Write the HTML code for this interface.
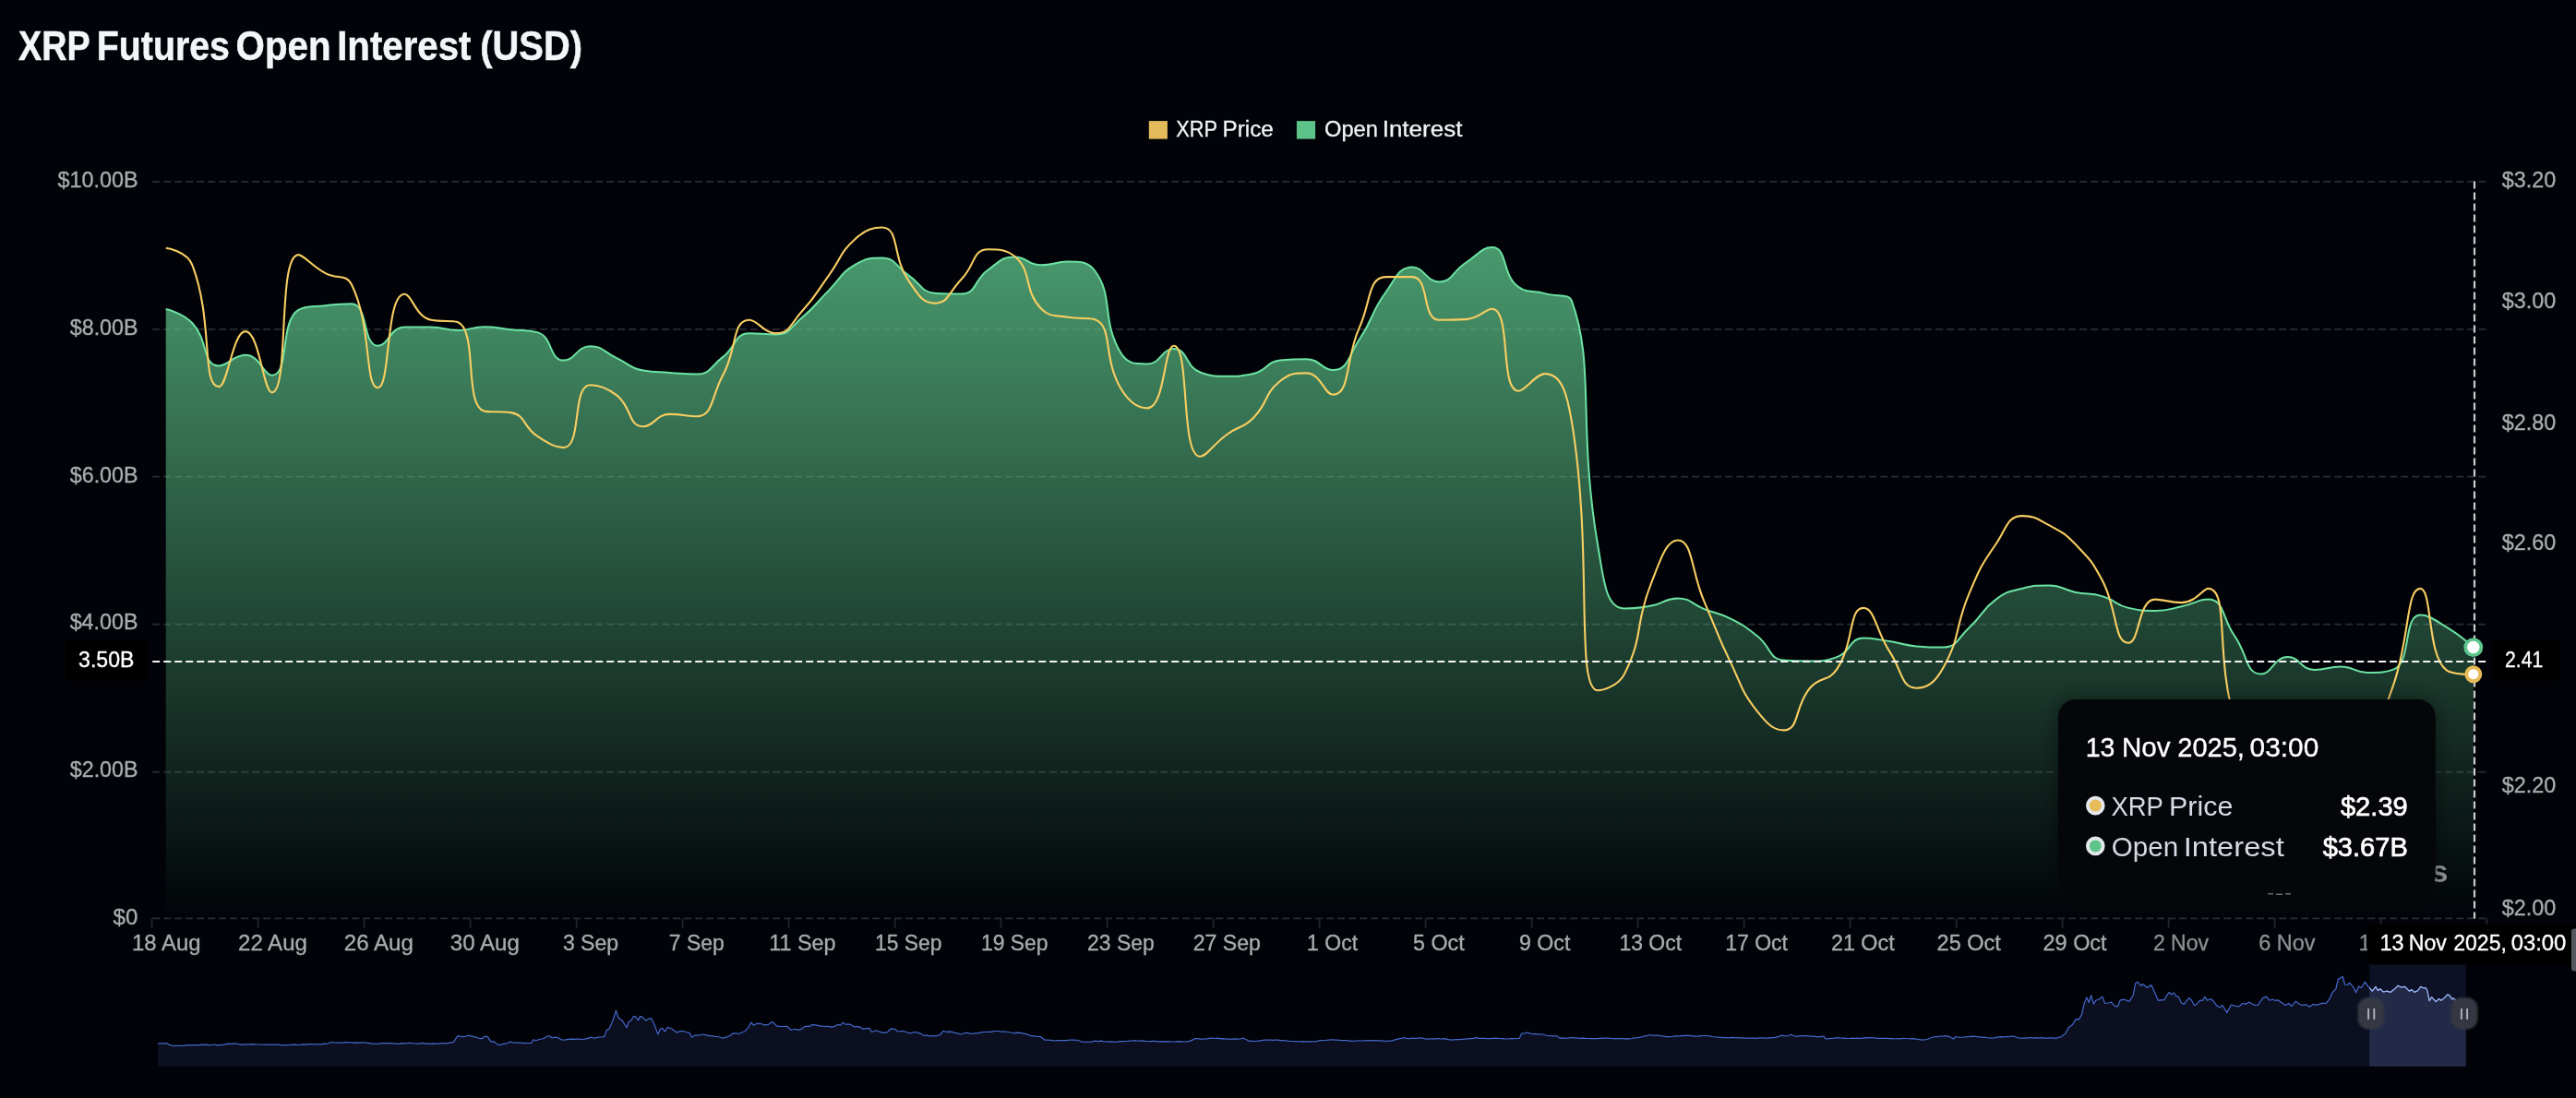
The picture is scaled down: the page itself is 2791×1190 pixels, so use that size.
<!DOCTYPE html>
<html lang="en"><head><meta charset="utf-8"><title>XRP Futures Open Interest (USD)</title>
<style>
html,body{margin:0;padding:0;background:#010308;}
body{width:2791px;height:1190px;overflow:hidden;font-family:"Liberation Sans", sans-serif;}
svg{display:block;will-change:transform;}
text{font-family:"Liberation Sans", sans-serif;}
</style></head><body>
<svg width="2791" height="1190" viewBox="0 0 2791 1190">
<defs>
<linearGradient id="ga" gradientUnits="userSpaceOnUse" x1="0" y1="268" x2="0" y2="996.4">
<stop offset="0" stop-color="#5dc389" stop-opacity="0.78"/>
<stop offset="1" stop-color="#5dc389" stop-opacity="0"/>
</linearGradient>
<clipPath id="plot"><rect x="160" y="180" width="2540" height="820"/></clipPath>
<filter id="sh" x="-20%" y="-20%" width="140%" height="140%"><feGaussianBlur stdDeviation="9"/></filter>
<filter id="hb" x="-30%" y="-30%" width="160%" height="160%"><feGaussianBlur stdDeviation="1.2"/></filter>
</defs>
<rect width="2791" height="1190" fill="#010308"/>
<text x="20.02" y="64.60" font-size="43.70" font-weight="700" fill="#f3f5f9" textLength="77.66" lengthAdjust="spacingAndGlyphs" stroke="#f3f5f9" stroke-width="0.5">XRP</text>
<text x="104.85" y="64.60" font-size="43.70" font-weight="700" fill="#f3f5f9" textLength="144.11" lengthAdjust="spacingAndGlyphs" stroke="#f3f5f9" stroke-width="0.5">Futures</text>
<text x="255.59" y="64.60" font-size="43.70" font-weight="700" fill="#f3f5f9" textLength="102.96" lengthAdjust="spacingAndGlyphs" stroke="#f3f5f9" stroke-width="0.5">Open</text>
<text x="365.19" y="64.60" font-size="43.70" font-weight="700" fill="#f3f5f9" textLength="145.21" lengthAdjust="spacingAndGlyphs" stroke="#f3f5f9" stroke-width="0.5">Interest</text>
<text x="520.31" y="64.60" font-size="43.70" font-weight="700" fill="#f3f5f9" textLength="110.69" lengthAdjust="spacingAndGlyphs" stroke="#f3f5f9" stroke-width="0.5">(USD)</text>
<rect x="1244.8" y="131.1" width="20.1" height="19.5" fill="#e4ba5b"/>
<text x="1274.26" y="147.70" font-size="24.20" fill="#f2f4f6" textLength="44.76" lengthAdjust="spacingAndGlyphs" stroke="#f2f4f6" stroke-width="0.3">XRP</text>
<text x="1324.56" y="147.70" font-size="24.20" fill="#f2f4f6" textLength="55.32" lengthAdjust="spacingAndGlyphs" stroke="#f2f4f6" stroke-width="0.3">Price</text>
<rect x="1404.9" y="131.1" width="20.2" height="19.5" fill="#5dc389"/>
<text x="1435.03" y="147.70" font-size="24.20" fill="#f2f4f6" textLength="57.94" lengthAdjust="spacingAndGlyphs" stroke="#f2f4f6" stroke-width="0.3">Open</text>
<text x="1497.66" y="147.70" font-size="24.20" fill="#f2f4f6" textLength="86.70" lengthAdjust="spacingAndGlyphs" stroke="#f2f4f6" stroke-width="0.3">Interest</text>
<line x1="165.2" y1="196.9" x2="2693.7" y2="196.9" stroke="#292c30" stroke-width="1.8" stroke-dasharray="8 4"/>
<line x1="165.2" y1="356.8" x2="2693.7" y2="356.8" stroke="#292c30" stroke-width="1.8" stroke-dasharray="8 4"/>
<line x1="165.2" y1="516.7" x2="2693.7" y2="516.7" stroke="#292c30" stroke-width="1.8" stroke-dasharray="8 4"/>
<line x1="165.2" y1="676.7" x2="2693.7" y2="676.7" stroke="#292c30" stroke-width="1.8" stroke-dasharray="8 4"/>
<line x1="165.2" y1="836.6" x2="2693.7" y2="836.6" stroke="#292c30" stroke-width="1.8" stroke-dasharray="8 4"/>
<line x1="165.2" y1="995.3" x2="2693.7" y2="995.3" stroke="#292c30" stroke-width="1.8" stroke-dasharray="8 4"/>
<line x1="164.6" y1="995.3" x2="164.6" y2="1005.4" stroke="#23262a" stroke-width="1.8"/>
<line x1="279.6" y1="995.3" x2="279.6" y2="1005.4" stroke="#23262a" stroke-width="1.8"/>
<line x1="394.6" y1="995.3" x2="394.6" y2="1005.4" stroke="#23262a" stroke-width="1.8"/>
<line x1="509.6" y1="995.3" x2="509.6" y2="1005.4" stroke="#23262a" stroke-width="1.8"/>
<line x1="624.6" y1="995.3" x2="624.6" y2="1005.4" stroke="#23262a" stroke-width="1.8"/>
<line x1="739.6" y1="995.3" x2="739.6" y2="1005.4" stroke="#23262a" stroke-width="1.8"/>
<line x1="854.6" y1="995.3" x2="854.6" y2="1005.4" stroke="#23262a" stroke-width="1.8"/>
<line x1="969.6" y1="995.3" x2="969.6" y2="1005.4" stroke="#23262a" stroke-width="1.8"/>
<line x1="1084.6" y1="995.3" x2="1084.6" y2="1005.4" stroke="#23262a" stroke-width="1.8"/>
<line x1="1199.6" y1="995.3" x2="1199.6" y2="1005.4" stroke="#23262a" stroke-width="1.8"/>
<line x1="1314.6" y1="995.3" x2="1314.6" y2="1005.4" stroke="#23262a" stroke-width="1.8"/>
<line x1="1429.6" y1="995.3" x2="1429.6" y2="1005.4" stroke="#23262a" stroke-width="1.8"/>
<line x1="1544.6" y1="995.3" x2="1544.6" y2="1005.4" stroke="#23262a" stroke-width="1.8"/>
<line x1="1659.6" y1="995.3" x2="1659.6" y2="1005.4" stroke="#23262a" stroke-width="1.8"/>
<line x1="1774.6" y1="995.3" x2="1774.6" y2="1005.4" stroke="#23262a" stroke-width="1.8"/>
<line x1="1889.6" y1="995.3" x2="1889.6" y2="1005.4" stroke="#23262a" stroke-width="1.8"/>
<line x1="2004.6" y1="995.3" x2="2004.6" y2="1005.4" stroke="#23262a" stroke-width="1.8"/>
<line x1="2119.6" y1="995.3" x2="2119.6" y2="1005.4" stroke="#23262a" stroke-width="1.8"/>
<line x1="2234.6" y1="995.3" x2="2234.6" y2="1005.4" stroke="#23262a" stroke-width="1.8"/>
<line x1="2349.6" y1="995.3" x2="2349.6" y2="1005.4" stroke="#23262a" stroke-width="1.8"/>
<line x1="2464.6" y1="995.3" x2="2464.6" y2="1005.4" stroke="#23262a" stroke-width="1.8"/>
<line x1="2579.6" y1="995.3" x2="2579.6" y2="1005.4" stroke="#23262a" stroke-width="1.8"/>
<line x1="2694.4" y1="995.3" x2="2694.4" y2="1005.4" stroke="#23262a" stroke-width="1.8"/>
<text x="62.47" y="202.90" font-size="24.50" fill="#a9abae" textLength="87.07" lengthAdjust="spacingAndGlyphs" stroke="#a9abae" stroke-width="0.35">$10.00B</text>
<text x="75.77" y="362.80" font-size="24.50" fill="#a9abae" textLength="73.73" lengthAdjust="spacingAndGlyphs" stroke="#a9abae" stroke-width="0.35">$8.00B</text>
<text x="75.77" y="522.70" font-size="24.50" fill="#a9abae" textLength="73.73" lengthAdjust="spacingAndGlyphs" stroke="#a9abae" stroke-width="0.35">$6.00B</text>
<text x="75.67" y="682.30" font-size="24.50" fill="#a9abae" textLength="73.84" lengthAdjust="spacingAndGlyphs" stroke="#a9abae" stroke-width="0.35">$4.00B</text>
<text x="75.77" y="842.00" font-size="24.50" fill="#a9abae" textLength="73.73" lengthAdjust="spacingAndGlyphs" stroke="#a9abae" stroke-width="0.35">$2.00B</text>
<text x="122.56" y="1001.80" font-size="24.50" fill="#a9abae" textLength="26.69" lengthAdjust="spacingAndGlyphs" stroke="#a9abae" stroke-width="0.35">$0</text>
<text x="2710.77" y="202.80" font-size="24.50" fill="#a9abae" textLength="58.51" lengthAdjust="spacingAndGlyphs" stroke="#a9abae" stroke-width="0.35">$3.20</text>
<text x="2710.77" y="333.60" font-size="24.50" fill="#a9abae" textLength="58.51" lengthAdjust="spacingAndGlyphs" stroke="#a9abae" stroke-width="0.35">$3.00</text>
<text x="2710.77" y="465.50" font-size="24.50" fill="#a9abae" textLength="58.51" lengthAdjust="spacingAndGlyphs" stroke="#a9abae" stroke-width="0.35">$2.80</text>
<text x="2710.77" y="596.40" font-size="24.50" fill="#a9abae" textLength="58.51" lengthAdjust="spacingAndGlyphs" stroke="#a9abae" stroke-width="0.35">$2.60</text>
<text x="2710.77" y="859.20" font-size="24.50" fill="#a9abae" textLength="58.51" lengthAdjust="spacingAndGlyphs" stroke="#a9abae" stroke-width="0.35">$2.20</text>
<text x="2710.77" y="991.60" font-size="24.50" fill="#a9abae" textLength="58.51" lengthAdjust="spacingAndGlyphs" stroke="#a9abae" stroke-width="0.35">$2.00</text>
<text x="143.06" y="1029.80" font-size="24.50" fill="#a9abae" textLength="74.43" lengthAdjust="spacingAndGlyphs" stroke="#a9abae" stroke-width="0.35">18 Aug</text>
<text x="258.00" y="1029.80" font-size="24.50" fill="#a9abae" textLength="74.95" lengthAdjust="spacingAndGlyphs" stroke="#a9abae" stroke-width="0.35">22 Aug</text>
<text x="372.79" y="1029.80" font-size="24.50" fill="#a9abae" textLength="75.16" lengthAdjust="spacingAndGlyphs" stroke="#a9abae" stroke-width="0.35">26 Aug</text>
<text x="487.84" y="1029.80" font-size="24.50" fill="#a9abae" textLength="75.12" lengthAdjust="spacingAndGlyphs" stroke="#a9abae" stroke-width="0.35">30 Aug</text>
<text x="609.88" y="1029.80" font-size="24.50" fill="#a9abae" textLength="60.32" lengthAdjust="spacingAndGlyphs" stroke="#a9abae" stroke-width="0.35">3 Sep</text>
<text x="724.80" y="1029.80" font-size="24.50" fill="#a9abae" textLength="60.05" lengthAdjust="spacingAndGlyphs" stroke="#a9abae" stroke-width="0.35">7 Sep</text>
<text x="833.25" y="1029.80" font-size="24.50" fill="#a9abae" textLength="72.29" lengthAdjust="spacingAndGlyphs" stroke="#a9abae" stroke-width="0.35">11 Sep</text>
<text x="948.09" y="1029.80" font-size="24.50" fill="#a9abae" textLength="72.42" lengthAdjust="spacingAndGlyphs" stroke="#a9abae" stroke-width="0.35">15 Sep</text>
<text x="1062.99" y="1029.80" font-size="24.50" fill="#a9abae" textLength="72.42" lengthAdjust="spacingAndGlyphs" stroke="#a9abae" stroke-width="0.35">19 Sep</text>
<text x="1178.00" y="1029.80" font-size="24.50" fill="#a9abae" textLength="72.76" lengthAdjust="spacingAndGlyphs" stroke="#a9abae" stroke-width="0.35">23 Sep</text>
<text x="1292.64" y="1029.80" font-size="24.50" fill="#a9abae" textLength="73.27" lengthAdjust="spacingAndGlyphs" stroke="#a9abae" stroke-width="0.35">27 Sep</text>
<text x="1416.08" y="1029.80" font-size="24.50" fill="#a9abae" textLength="54.95" lengthAdjust="spacingAndGlyphs" stroke="#a9abae" stroke-width="0.35">1 Oct</text>
<text x="1531.07" y="1029.80" font-size="24.50" fill="#a9abae" textLength="55.55" lengthAdjust="spacingAndGlyphs" stroke="#a9abae" stroke-width="0.35">5 Oct</text>
<text x="1646.01" y="1029.80" font-size="24.50" fill="#a9abae" textLength="55.37" lengthAdjust="spacingAndGlyphs" stroke="#a9abae" stroke-width="0.35">9 Oct</text>
<text x="1754.38" y="1029.80" font-size="24.50" fill="#a9abae" textLength="67.66" lengthAdjust="spacingAndGlyphs" stroke="#a9abae" stroke-width="0.35">13 Oct</text>
<text x="1869.17" y="1029.80" font-size="24.50" fill="#a9abae" textLength="67.86" lengthAdjust="spacingAndGlyphs" stroke="#a9abae" stroke-width="0.35">17 Oct</text>
<text x="1983.93" y="1029.80" font-size="24.50" fill="#a9abae" textLength="68.70" lengthAdjust="spacingAndGlyphs" stroke="#a9abae" stroke-width="0.35">21 Oct</text>
<text x="2098.58" y="1029.80" font-size="24.50" fill="#a9abae" textLength="69.21" lengthAdjust="spacingAndGlyphs" stroke="#a9abae" stroke-width="0.35">25 Oct</text>
<text x="2213.58" y="1029.80" font-size="24.50" fill="#a9abae" textLength="69.01" lengthAdjust="spacingAndGlyphs" stroke="#a9abae" stroke-width="0.35">29 Oct</text>
<text x="2332.90" y="1029.80" font-size="24.50" fill="#8d8f93" textLength="60.22" lengthAdjust="spacingAndGlyphs" stroke="#8d8f93" stroke-width="0.35">2 Nov</text>
<text x="2447.17" y="1029.80" font-size="24.50" fill="#8d8f93" textLength="61.45" lengthAdjust="spacingAndGlyphs" stroke="#8d8f93" stroke-width="0.35">6 Nov</text>
<text x="2555.81" y="1029.80" font-size="24.50" fill="#8d8f93" textLength="73.32" lengthAdjust="spacingAndGlyphs" stroke="#8d8f93" stroke-width="0.35">10 Nov</text>
<g clip-path="url(#plot)">
<path d="M179.7 335.1C179.7 335.1 197.7 338.8 208.4 350.3C226.4 369.5 218.9 396.5 237.2 396.5C247.6 396.5 252.6 384.8 265.9 384.8C281.4 384.8 285.4 406.7 294.6 406.7C314.2 406.7 302.6 347.9 323.4 335.8C331.3 331.2 337.7 332.8 352.1 331.2C366.4 329.6 370.8 329.3 380.9 329.3C399.6 329.3 392.2 374.8 409.6 374.8C421.0 374.8 422.5 354.5 438.3 354.5C451.3 354.5 452.8 354.5 467.1 354.5C481.5 354.5 481.4 358.0 495.8 358.0C510.2 358.0 510.2 354.2 524.5 354.2C538.9 354.2 538.9 355.8 553.3 357.3C567.6 358.8 570.3 357.3 582.0 360.1C599.0 364.2 594.6 390.6 610.8 390.6C623.3 390.6 624.9 375.2 639.5 375.2C653.6 375.2 653.9 381.5 668.2 388.1C682.7 394.7 681.9 399.1 697.0 401.6C710.6 403.9 711.3 402.9 725.7 403.9C740.1 404.9 741.3 405.6 754.4 405.6C770.1 405.6 769.6 397.3 783.2 386.9C798.4 375.2 795.5 361.3 811.9 361.3C824.2 361.3 827.5 362.4 840.7 362.4C856.3 362.4 856.3 354.7 869.4 343.8C885.0 330.8 883.6 329.0 898.1 314.6C912.3 300.4 910.3 296.1 926.9 286.6C939.1 279.6 942.3 279.6 955.6 279.6C971.0 279.6 970.0 288.8 984.3 298.3C998.8 307.9 997.4 316.6 1013.1 317.7C1026.1 318.6 1029.6 318.6 1041.8 318.6C1058.3 318.6 1054.8 303.5 1070.5 292.5C1083.5 283.4 1084.5 278.5 1099.3 278.5C1113.2 278.5 1113.4 287.3 1128.0 287.3C1142.1 287.3 1142.7 283.6 1156.8 283.6C1171.4 283.6 1178.5 283.6 1185.5 292.5C1207.3 320.4 1192.6 345.7 1214.2 382.3C1221.4 394.4 1229.0 394.4 1243.0 394.4C1257.8 394.4 1258.4 378.1 1271.7 378.1C1287.1 378.1 1284.1 397.8 1300.4 403.5C1312.8 407.8 1314.8 407.8 1329.2 407.8C1343.5 407.8 1344.3 407.8 1357.9 405.1C1373.1 402.1 1371.5 392.2 1386.7 390.6C1400.2 389.2 1401.6 389.2 1415.4 389.2C1430.3 389.2 1432.2 401.1 1444.1 401.1C1461.0 401.1 1460.6 385.9 1472.9 367.8C1489.3 343.6 1484.4 339.9 1501.6 316.5C1513.1 300.8 1514.7 289.6 1530.3 289.6C1543.4 289.6 1545.2 305.5 1559.1 305.5C1574.0 305.5 1573.0 294.6 1587.8 285.0C1601.8 275.9 1605.3 268.0 1616.5 268.0C1634.0 268.0 1627.0 298.8 1645.3 311.1C1655.7 318.1 1659.7 314.4 1674.0 318.1C1688.4 321.8 1699.9 318.1 1702.8 325.8C1728.6 395.4 1708.9 461.6 1731.5 593.0C1737.6 628.5 1739.7 659.6 1760.2 659.6C1768.4 659.6 1774.8 659.4 1789.0 656.6C1803.6 653.8 1803.6 648.4 1817.7 648.4C1832.3 648.4 1832.0 654.5 1846.4 660.1C1860.7 665.6 1861.6 663.7 1875.2 670.6C1890.4 678.3 1890.5 678.8 1903.9 689.3C1919.2 701.3 1916.1 714.4 1932.7 715.6C1944.9 716.5 1947.1 716.5 1961.4 716.5C1975.8 716.5 1977.2 716.5 1990.1 712.1C2005.9 706.8 2003.1 691.6 2018.9 691.6C2031.8 691.6 2033.3 692.9 2047.6 695.1C2062.0 697.3 2061.9 699.2 2076.3 700.4C2090.6 701.6 2092.3 701.6 2105.1 701.6C2121.1 701.6 2120.5 691.9 2133.8 679.9C2149.2 665.9 2146.1 661.7 2162.6 649.6C2174.8 640.6 2176.4 641.2 2191.3 637.7C2205.1 634.4 2205.8 634.4 2220.0 634.4C2234.6 634.4 2234.2 638.9 2248.8 641.9C2263.0 644.8 2263.7 642.0 2277.5 646.1C2292.4 650.5 2291.3 655.5 2306.2 658.9C2320.0 662.0 2320.7 662.0 2335.0 662.0C2349.4 662.0 2349.5 660.4 2363.7 657.3C2378.2 654.2 2381.6 649.6 2392.4 649.6C2410.3 649.6 2407.0 669.3 2421.2 689.3C2435.7 709.8 2432.8 730.5 2449.9 730.5C2461.5 730.5 2463.8 712.1 2478.7 712.1C2492.5 712.1 2492.3 725.9 2507.4 725.9C2521.1 725.9 2521.9 722.4 2536.1 722.4C2550.6 722.4 2550.4 728.9 2564.9 728.9C2579.1 728.9 2584.8 728.9 2593.6 725.4C2613.5 717.5 2603.0 666.6 2622.3 666.6C2631.7 666.6 2637.6 671.7 2651.1 679.9C2666.4 689.2 2679.8 701.6 2679.8 701.6L2679.8 996.4 L179.7 996.4 Z" fill="url(#ga)"/>
<path d="M179.7 335.1C179.7 335.1 197.7 338.8 208.4 350.3C226.4 369.5 218.9 396.5 237.2 396.5C247.6 396.5 252.6 384.8 265.9 384.8C281.4 384.8 285.4 406.7 294.6 406.7C314.2 406.7 302.6 347.9 323.4 335.8C331.3 331.2 337.7 332.8 352.1 331.2C366.4 329.6 370.8 329.3 380.9 329.3C399.6 329.3 392.2 374.8 409.6 374.8C421.0 374.8 422.5 354.5 438.3 354.5C451.3 354.5 452.8 354.5 467.1 354.5C481.5 354.5 481.4 358.0 495.8 358.0C510.2 358.0 510.2 354.2 524.5 354.2C538.9 354.2 538.9 355.8 553.3 357.3C567.6 358.8 570.3 357.3 582.0 360.1C599.0 364.2 594.6 390.6 610.8 390.6C623.3 390.6 624.9 375.2 639.5 375.2C653.6 375.2 653.9 381.5 668.2 388.1C682.7 394.7 681.9 399.1 697.0 401.6C710.6 403.9 711.3 402.9 725.7 403.9C740.1 404.9 741.3 405.6 754.4 405.6C770.1 405.6 769.6 397.3 783.2 386.9C798.4 375.2 795.5 361.3 811.9 361.3C824.2 361.3 827.5 362.4 840.7 362.4C856.3 362.4 856.3 354.7 869.4 343.8C885.0 330.8 883.6 329.0 898.1 314.6C912.3 300.4 910.3 296.1 926.9 286.6C939.1 279.6 942.3 279.6 955.6 279.6C971.0 279.6 970.0 288.8 984.3 298.3C998.8 307.9 997.4 316.6 1013.1 317.7C1026.1 318.6 1029.6 318.6 1041.8 318.6C1058.3 318.6 1054.8 303.5 1070.5 292.5C1083.5 283.4 1084.5 278.5 1099.3 278.5C1113.2 278.5 1113.4 287.3 1128.0 287.3C1142.1 287.3 1142.7 283.6 1156.8 283.6C1171.4 283.6 1178.5 283.6 1185.5 292.5C1207.3 320.4 1192.6 345.7 1214.2 382.3C1221.4 394.4 1229.0 394.4 1243.0 394.4C1257.8 394.4 1258.4 378.1 1271.7 378.1C1287.1 378.1 1284.1 397.8 1300.4 403.5C1312.8 407.8 1314.8 407.8 1329.2 407.8C1343.5 407.8 1344.3 407.8 1357.9 405.1C1373.1 402.1 1371.5 392.2 1386.7 390.6C1400.2 389.2 1401.6 389.2 1415.4 389.2C1430.3 389.2 1432.2 401.1 1444.1 401.1C1461.0 401.1 1460.6 385.9 1472.9 367.8C1489.3 343.6 1484.4 339.9 1501.6 316.5C1513.1 300.8 1514.7 289.6 1530.3 289.6C1543.4 289.6 1545.2 305.5 1559.1 305.5C1574.0 305.5 1573.0 294.6 1587.8 285.0C1601.8 275.9 1605.3 268.0 1616.5 268.0C1634.0 268.0 1627.0 298.8 1645.3 311.1C1655.7 318.1 1659.7 314.4 1674.0 318.1C1688.4 321.8 1699.9 318.1 1702.8 325.8C1728.6 395.4 1708.9 461.6 1731.5 593.0C1737.6 628.5 1739.7 659.6 1760.2 659.6C1768.4 659.6 1774.8 659.4 1789.0 656.6C1803.6 653.8 1803.6 648.4 1817.7 648.4C1832.3 648.4 1832.0 654.5 1846.4 660.1C1860.7 665.6 1861.6 663.7 1875.2 670.6C1890.4 678.3 1890.5 678.8 1903.9 689.3C1919.2 701.3 1916.1 714.4 1932.7 715.6C1944.9 716.5 1947.1 716.5 1961.4 716.5C1975.8 716.5 1977.2 716.5 1990.1 712.1C2005.9 706.8 2003.1 691.6 2018.9 691.6C2031.8 691.6 2033.3 692.9 2047.6 695.1C2062.0 697.3 2061.9 699.2 2076.3 700.4C2090.6 701.6 2092.3 701.6 2105.1 701.6C2121.1 701.6 2120.5 691.9 2133.8 679.9C2149.2 665.9 2146.1 661.7 2162.6 649.6C2174.8 640.6 2176.4 641.2 2191.3 637.7C2205.1 634.4 2205.8 634.4 2220.0 634.4C2234.6 634.4 2234.2 638.9 2248.8 641.9C2263.0 644.8 2263.7 642.0 2277.5 646.1C2292.4 650.5 2291.3 655.5 2306.2 658.9C2320.0 662.0 2320.7 662.0 2335.0 662.0C2349.4 662.0 2349.5 660.4 2363.7 657.3C2378.2 654.2 2381.6 649.6 2392.4 649.6C2410.3 649.6 2407.0 669.3 2421.2 689.3C2435.7 709.8 2432.8 730.5 2449.9 730.5C2461.5 730.5 2463.8 712.1 2478.7 712.1C2492.5 712.1 2492.3 725.9 2507.4 725.9C2521.1 725.9 2521.9 722.4 2536.1 722.4C2550.6 722.4 2550.4 728.9 2564.9 728.9C2579.1 728.9 2584.8 728.9 2593.6 725.4C2613.5 717.5 2603.0 666.6 2622.3 666.6C2631.7 666.6 2637.6 671.7 2651.1 679.9C2666.4 689.2 2679.8 701.6 2679.8 701.6" fill="none" stroke="#6ce3a3" stroke-width="2.0" stroke-linejoin="round"/>
<path d="M179.7 268.7C179.7 268.7 202.6 272.1 208.4 287.3C231.4 347.3 217.9 419.1 237.2 419.1C246.7 419.1 252.1 359.1 265.9 359.1C280.9 359.1 285.4 425.4 294.6 425.4C314.1 425.4 300.0 276.1 323.4 276.1C328.7 276.1 337.0 287.4 352.1 295.9C365.7 303.5 374.7 295.9 380.9 308.3C403.5 354.1 394.6 420.2 409.6 420.2C423.3 420.2 417.5 318.8 438.3 318.8C446.3 318.8 450.3 343.6 467.1 346.8C479.1 349.1 489.4 346.8 495.8 349.1C518.1 357.1 502.2 439.5 524.5 445.4C530.9 447.1 541.0 445.4 553.3 447.1C569.7 449.4 566.2 462.2 582.0 472.7C594.9 481.2 602.2 485.1 610.8 485.1C630.9 485.1 619.2 417.2 639.5 417.2C648.0 417.2 656.4 419.2 668.2 428.4C685.2 441.7 680.2 462.2 697.0 462.2C708.9 462.2 710.7 448.9 725.7 448.9C739.4 448.9 744.3 451.3 754.4 451.3C773.1 451.3 770.4 429.9 783.2 406.7C799.2 377.6 792.6 346.8 811.9 346.8C821.3 346.8 827.4 361.3 840.7 361.3C856.2 361.3 856.7 350.7 869.4 336.8C885.5 319.2 883.9 317.6 898.1 298.3C912.6 278.6 909.3 274.5 926.9 258.7C938.1 248.6 946.2 246.5 955.6 246.5C975.0 246.5 966.2 278.2 984.3 304.1C995.0 319.3 998.9 328.6 1013.1 328.6C1027.6 328.6 1028.2 316.3 1041.8 302.5C1056.9 287.2 1053.5 270.3 1070.5 270.3C1082.3 270.3 1090.1 270.3 1099.3 277.8C1118.9 293.8 1108.6 314.7 1128.0 334.4C1137.3 343.8 1142.0 341.4 1156.8 343.8C1170.8 346.1 1177.9 343.8 1185.5 346.1C1206.6 352.5 1194.4 387.5 1214.2 420.7C1223.2 435.7 1233.5 442.4 1243.0 442.4C1262.3 442.4 1261.0 374.8 1271.7 374.8C1289.7 374.8 1278.4 494.8 1300.4 494.8C1307.1 494.8 1314.1 482.0 1329.2 471.0C1342.9 461.0 1346.2 464.7 1357.9 452.9C1374.9 435.8 1368.8 427.6 1386.7 413.2C1397.6 404.4 1402.5 404.4 1415.4 404.4C1431.2 404.4 1434.9 427.7 1444.1 427.7C1463.6 427.7 1456.8 390.5 1472.9 354.9C1485.6 326.7 1482.0 300.1 1501.6 300.1C1510.7 300.1 1520.5 300.1 1530.3 300.1C1549.2 300.1 1540.2 346.8 1559.1 346.8C1569.0 346.8 1574.0 346.8 1587.8 346.1C1602.7 345.3 1609.4 334.7 1616.5 334.7C1638.1 334.7 1624.2 423.7 1645.3 423.7C1653.0 423.7 1663.5 405.1 1674.0 405.1C1692.2 405.1 1698.0 427.7 1702.8 456.4C1726.7 599.3 1705.7 748.3 1731.5 748.3C1734.5 748.3 1753.1 744.6 1760.2 730.1C1781.8 686.5 1770.3 679.2 1789.0 632.1C1799.0 606.9 1805.3 585.5 1817.7 585.5C1834.1 585.5 1832.1 618.7 1846.4 651.9C1860.8 685.1 1859.4 685.8 1875.2 718.4C1888.2 745.3 1885.8 747.9 1903.9 770.9C1914.6 784.4 1921.3 791.4 1932.7 791.4C1950.1 791.4 1943.9 765.3 1961.4 745.2C1972.6 732.3 1980.8 739.4 1990.1 725.4C2009.5 696.3 2002.6 658.9 2018.9 658.9C2031.4 658.9 2032.2 683.5 2047.6 706.7C2061.0 726.9 2059.8 745.7 2076.3 745.7C2088.6 745.7 2096.7 739.3 2105.1 724.2C2125.4 687.8 2116.9 682.3 2133.8 642.6C2145.6 614.9 2145.6 614.2 2162.6 589.5C2174.3 572.4 2174.7 559.1 2191.3 559.1C2203.4 559.1 2206.8 562.0 2220.0 569.2C2235.5 577.5 2236.5 577.5 2248.8 590.1C2265.3 607.2 2266.2 607.6 2277.5 628.6C2294.9 660.9 2289.8 696.7 2306.2 696.7C2318.5 696.7 2316.1 649.6 2335.0 649.6C2344.9 649.6 2350.2 653.1 2363.7 653.1C2378.9 653.1 2387.2 637.9 2392.4 637.9C2415.9 637.9 2399.7 712.0 2421.2 780.0C2428.5 803.1 2433.1 802.5 2449.9 820.0C2461.9 832.5 2462.9 840.0 2478.7 840.0C2491.6 840.0 2493.0 840.0 2507.4 840.0C2521.8 840.0 2525.0 840.0 2536.1 840.0C2553.7 840.0 2553.6 824.4 2564.9 805.0C2582.3 774.9 2582.2 774.1 2593.6 741.0C2611.0 690.5 2607.0 637.9 2622.3 637.9C2635.7 637.9 2629.2 711.9 2651.1 726.6C2657.9 731.2 2679.8 731.2 2679.8 731.2" fill="none" stroke="#f8ce62" stroke-width="2.1" stroke-linejoin="round"/>
</g>
<text x="2634" y="955.5" font-size="33" font-weight="700" fill="#96989c">s</text>
<path d="M2457 968.6h6M2466 969.2h7M2476 968.6h6" stroke="#8a8c90" stroke-width="1.6" fill="none"/>
<line x1="165.2" y1="717" x2="2693.7" y2="717" stroke="#f4f4f4" stroke-width="2.2" stroke-dasharray="8 4"/>
<line x1="2681" y1="196.4" x2="2681" y2="995.5" stroke="#cbcdd0" stroke-width="2.2" stroke-dasharray="8 4"/>
<rect x="71.2" y="693.9" width="88.1" height="44.2" rx="4.5" fill="#000"/>
<text x="85.08" y="722.80" font-size="24.50" fill="#fff" textLength="60.25" lengthAdjust="spacingAndGlyphs" stroke="#fff" stroke-width="0.35">3.50B</text>
<rect x="2699.8" y="693.8" width="72.8" height="44.2" rx="4.5" fill="#000"/>
<text x="2713.94" y="722.90" font-size="24.50" fill="#fff" textLength="41.35" lengthAdjust="spacingAndGlyphs" stroke="#fff" stroke-width="0.35">2.41</text>
<circle cx="2679.8" cy="701.6" r="8.6" fill="#fff" stroke="#5dc68c" stroke-width="3.7"/>
<circle cx="2679.8" cy="730.7" r="7.5" fill="#fff" stroke="#e6bb58" stroke-width="3.9"/>
<clipPath id="win"><rect x="2567.2" y="1040" width="104.6" height="120"/></clipPath>
<path d="M170.9 1131.0L174.1 1130.9L177.2 1130.8L180.4 1130.7L183.9 1132.4L187.3 1133.5L190.4 1133.4L193.5 1133.4L196.6 1133.3L199.7 1133.2L203.0 1132.7L206.3 1132.7L209.6 1132.5L212.4 1132.6L215.2 1132.7L218.0 1132.1L220.8 1132.3L223.6 1132.1L226.4 1132.6L229.2 1132.5L232.0 1132.0L234.8 1132.6L237.6 1132.6L240.4 1132.3L243.2 1132.2L246.9 1131.2L249.7 1131.4L252.4 1131.1L255.2 1131.1L258.0 1131.5L260.6 1132.2L263.4 1132.2L266.3 1131.8L269.1 1131.9L271.9 1131.9L274.7 1131.7L277.6 1132.0L280.4 1132.0L283.1 1132.0L285.8 1132.3L288.6 1132.1L291.3 1132.2L294.0 1132.2L296.7 1132.3L299.4 1132.2L302.1 1132.1L304.9 1132.6L307.6 1132.7L310.3 1132.6L313.0 1132.5L315.7 1132.3L318.5 1132.2L321.2 1132.3L323.9 1132.5L327.2 1131.9L330.6 1132.1L333.9 1131.6L336.7 1131.5L339.6 1131.8L342.4 1131.5L345.2 1131.9L348.0 1131.8L350.9 1131.2L353.7 1131.5L356.8 1130.3L359.9 1129.5L362.8 1130.0L365.7 1129.9L368.6 1130.1L371.5 1130.2L374.4 1129.6L377.3 1129.5L382.3 1130.1L384.9 1129.8L387.5 1130.2L390.1 1130.2L392.7 1129.9L395.3 1130.0L398.8 1130.3L402.2 1131.2L405.2 1131.0L408.2 1131.3L411.1 1131.1L414.1 1130.5L417.1 1130.7L420.2 1130.6L423.3 1130.7L426.4 1130.8L429.5 1131.2L432.2 1131.3L434.9 1130.7L437.6 1130.9L440.3 1130.7L443.0 1130.4L445.7 1130.5L449.4 1131.0L453.1 1131.2L458.1 1130.4L460.0 1131.2L463.0 1130.9L466.0 1131.3L468.9 1130.9L471.9 1131.1L474.9 1131.2L477.6 1130.7L480.3 1130.5L483.0 1130.8L485.7 1130.4L488.4 1129.8L491.1 1129.7L496.0 1122.7L501.0 1123.7L504.1 1123.3L507.2 1122.2L510.3 1122.8L513.4 1123.7L516.3 1124.3L519.2 1125.3L522.1 1125.7L525.1 1123.2L528.3 1123.7L532.0 1128.9L535.0 1128.7L539.5 1132.4L542.4 1132.1L545.3 1131.3L548.2 1131.2L552.4 1129.2L555.9 1130.0L559.4 1130.2L562.1 1130.1L564.8 1130.2L567.5 1130.6L570.1 1130.4L572.8 1130.5L575.5 1130.7L578.0 1126.7L580.5 1127.7L584.2 1126.5L589.2 1125.5L591.9 1123.7L594.7 1122.5L597.9 1124.7L602.9 1124.2L606.0 1125.4L609.1 1127.2L612.4 1126.9L615.7 1126.4L619.0 1126.2L622.0 1126.3L625.0 1126.1L628.0 1126.2L630.9 1126.5L633.9 1126.2L637.4 1125.2L640.9 1124.2L643.9 1125.2L648.8 1124.2L651.7 1124.0L654.5 1123.7L657.5 1116.0L660.0 1115.3L663.7 1106.8L667.5 1095.4L669.9 1102.9L674.2 1106.1L679.1 1113.8L681.1 1107.3L683.6 1106.3L686.6 1101.4L688.6 1101.9L691.6 1105.8L693.5 1101.4L696.0 1102.4L699.8 1106.1L703.0 1103.9L706.0 1103.9L709.7 1112.3L712.9 1121.0L715.4 1115.3L717.4 1114.3L720.4 1117.8L723.4 1113.3L728.3 1115.3L732.8 1118.8L736.3 1117.8L739.5 1117.3L743.2 1118.5L747.0 1119.3L749.4 1124.2L752.7 1122.2L756.9 1122.2L760.6 1121.0L764.3 1121.6L768.1 1122.7L771.4 1122.7L774.7 1123.5L778.0 1123.5L783.0 1125.2L786.7 1124.2L790.4 1122.7L794.2 1119.8L797.3 1119.9L800.4 1120.5L803.5 1119.0L806.6 1118.0L810.3 1114.3L814.0 1108.1L816.5 1111.1L820.2 1109.3L824.0 1109.3L827.7 1110.8L832.7 1110.3L837.1 1107.3L841.4 1111.8L844.5 1112.3L847.6 1112.5L852.5 1112.3L857.5 1116.5L861.2 1115.3L866.2 1116.3L869.3 1114.6L872.4 1112.3L877.4 1112.3L879.9 1110.6L883.6 1110.8L887.3 1111.6L890.6 1112.1L894.0 1112.3L897.3 1112.3L901.7 1113.3L905.1 1111.9L908.4 1110.3L910.2 1111.3L913.4 1108.1L915.9 1110.1L920.9 1110.1L925.8 1113.0L928.3 1112.3L932.0 1113.3L935.0 1115.3L938.5 1114.7L942.0 1114.3L944.5 1118.5L949.4 1116.8L953.2 1118.3L958.1 1119.3L961.9 1118.3L965.6 1114.8L969.3 1115.3L973.0 1118.0L978.0 1117.3L981.7 1118.5L986.7 1119.8L990.4 1118.5L993.5 1118.9L996.6 1119.8L1001.6 1122.5L1004.3 1122.2L1007.1 1122.9L1009.8 1122.5L1012.5 1122.8L1015.3 1122.7L1019.0 1121.0L1022.0 1117.3L1025.2 1118.3L1028.3 1118.1L1031.4 1118.3L1034.7 1119.4L1038.1 1120.2L1041.4 1121.0L1046.3 1119.3L1049.4 1119.7L1052.5 1120.5L1055.4 1119.9L1058.3 1119.8L1061.2 1119.3L1064.1 1118.7L1067.0 1118.5L1069.9 1118.4L1072.8 1118.3L1075.7 1117.9L1078.6 1117.5L1081.9 1117.5L1085.3 1118.1L1088.6 1118.0L1091.9 1118.5L1095.2 1119.0L1098.5 1120.0L1100.0 1119.3L1103.1 1119.1L1106.2 1119.3L1109.0 1120.1L1111.8 1120.7L1114.6 1121.6L1117.4 1122.7L1120.7 1122.9L1124.0 1123.3L1127.3 1123.5L1132.3 1127.2L1135.2 1127.0L1138.1 1127.3L1141.0 1127.7L1143.9 1127.9L1146.8 1127.7L1149.7 1127.7L1152.7 1127.7L1155.7 1127.6L1158.6 1127.2L1161.6 1127.0L1164.6 1127.2L1167.9 1127.5L1171.2 1128.8L1174.5 1129.2L1178.3 1129.3L1182.0 1129.2L1187.0 1128.2L1189.8 1128.7L1192.6 1128.1L1195.5 1128.7L1198.3 1128.8L1201.2 1129.1L1204.0 1128.9L1206.8 1129.2L1209.6 1129.4L1212.4 1128.5L1215.2 1128.7L1218.0 1128.6L1220.8 1128.5L1223.6 1128.2L1226.4 1128.0L1229.2 1127.7L1232.0 1128.0L1234.9 1128.2L1237.7 1127.9L1240.6 1128.3L1243.4 1128.5L1246.2 1128.6L1249.1 1128.4L1251.8 1128.4L1254.6 1128.8L1257.3 1128.9L1260.1 1128.7L1262.9 1128.8L1265.6 1128.7L1268.4 1128.9L1271.2 1129.0L1273.9 1128.9L1276.9 1128.6L1279.9 1128.8L1282.9 1129.0L1285.8 1128.8L1288.8 1128.4L1291.9 1127.1L1295.0 1125.5L1297.9 1125.6L1300.8 1126.1L1303.7 1126.2L1307.0 1125.9L1310.4 1125.3L1313.7 1125.0L1316.6 1125.5L1319.6 1125.2L1322.6 1125.9L1325.6 1125.6L1328.6 1126.2L1331.6 1126.2L1334.5 1126.1L1337.5 1125.9L1340.5 1126.2L1343.5 1126.0L1347.2 1125.2L1350.3 1126.7L1353.4 1128.2L1356.7 1128.3L1360.0 1128.5L1363.4 1128.2L1366.7 1127.7L1370.0 1127.2L1373.3 1127.2L1376.2 1127.1L1379.1 1127.4L1382.0 1127.1L1384.9 1127.1L1387.8 1127.7L1390.7 1127.5L1394.4 1128.1L1398.1 1128.4L1401.0 1128.5L1403.8 1128.9L1406.7 1128.5L1409.5 1128.8L1412.3 1128.6L1415.2 1128.8L1418.0 1128.9L1421.1 1128.8L1424.2 1128.6L1427.3 1128.3L1430.4 1127.7L1433.4 1127.5L1436.4 1127.5L1439.4 1127.1L1442.4 1126.9L1445.3 1127.0L1448.4 1127.1L1451.6 1127.4L1454.7 1127.6L1457.8 1127.5L1461.1 1127.8L1464.4 1128.3L1467.7 1128.2L1470.5 1128.0L1473.4 1127.8L1476.2 1128.0L1479.1 1127.8L1481.9 1127.6L1484.7 1127.7L1487.6 1127.7L1490.4 1127.9L1493.3 1127.8L1496.1 1127.8L1498.9 1128.2L1501.8 1128.4L1504.6 1128.1L1507.5 1128.2L1510.8 1127.1L1514.1 1126.2L1517.4 1125.7L1520.4 1124.7L1524.8 1125.5L1527.5 1125.6L1530.2 1125.0L1532.9 1125.4L1535.6 1125.2L1538.3 1124.9L1541.0 1125.0L1544.1 1125.8L1547.2 1126.2L1550.1 1125.8L1553.0 1125.8L1555.9 1125.9L1558.8 1125.5L1561.7 1126.0L1564.6 1125.7L1568.3 1126.3L1572.0 1127.2L1575.0 1126.8L1578.0 1126.5L1581.0 1126.7L1584.0 1126.4L1587.0 1126.2L1590.1 1125.9L1593.2 1125.6L1596.3 1125.3L1599.4 1124.7L1602.5 1125.3L1605.6 1125.3L1608.7 1125.3L1611.8 1125.7L1614.9 1125.6L1618.0 1125.4L1621.1 1125.2L1624.2 1125.5L1627.5 1125.6L1630.8 1125.9L1634.2 1126.0L1637.1 1125.6L1640.1 1125.6L1643.1 1125.5L1646.1 1125.5L1648.6 1120.2L1651.6 1119.8L1654.5 1119.0L1657.4 1119.8L1660.2 1120.5L1663.0 1120.7L1665.8 1120.9L1668.6 1120.8L1671.4 1121.0L1676.4 1122.5L1679.7 1122.7L1683.0 1122.8L1686.3 1122.5L1690.1 1125.2L1692.8 1124.8L1695.5 1125.3L1698.3 1125.1L1701.0 1124.6L1703.7 1124.7L1706.6 1124.8L1709.5 1125.1L1712.4 1125.4L1715.3 1125.1L1718.2 1125.4L1721.1 1125.5L1724.0 1125.7L1726.9 1125.6L1729.8 1125.7L1732.7 1125.3L1735.6 1125.4L1738.5 1125.2L1740.0 1125.2L1742.8 1125.1L1745.6 1125.5L1748.4 1125.6L1751.2 1125.6L1754.0 1125.7L1756.8 1125.4L1759.6 1125.9L1762.4 1125.7L1765.3 1125.8L1768.3 1125.5L1771.3 1124.8L1774.3 1124.7L1777.3 1124.2L1780.6 1123.2L1783.9 1122.7L1787.2 1121.5L1790.3 1122.1L1793.4 1122.0L1796.5 1122.1L1799.6 1122.7L1802.7 1123.2L1805.8 1123.7L1808.5 1123.6L1811.1 1123.5L1813.8 1123.2L1816.4 1122.7L1819.0 1123.0L1821.7 1122.3L1824.3 1122.6L1827.0 1122.2L1830.1 1122.3L1833.2 1122.6L1836.3 1123.2L1839.4 1123.2L1842.7 1122.7L1846.0 1122.5L1849.3 1122.5L1852.4 1122.9L1855.5 1123.5L1858.6 1124.0L1861.7 1124.2L1864.6 1124.4L1867.5 1124.7L1870.4 1124.5L1873.3 1124.9L1876.2 1124.3L1879.1 1124.7L1882.0 1124.6L1884.8 1124.9L1887.6 1124.8L1890.5 1125.2L1893.3 1125.2L1896.2 1125.2L1899.0 1125.2L1901.8 1125.4L1904.6 1125.1L1907.4 1124.9L1910.2 1124.9L1913.0 1125.1L1915.8 1125.1L1918.6 1124.6L1921.4 1124.7L1924.3 1124.1L1927.2 1123.4L1930.1 1122.2L1933.2 1122.6L1936.3 1123.0L1940.7 1121.2L1945.0 1123.2L1947.8 1123.1L1950.6 1122.6L1953.4 1122.7L1956.1 1122.5L1959.3 1122.8L1962.4 1123.2L1965.5 1123.1L1968.6 1123.7L1972.0 1123.7L1975.5 1123.0L1978.5 1126.0L1981.6 1125.7L1984.7 1125.3L1987.8 1125.2L1990.9 1124.7L1994.0 1125.0L1997.1 1125.1L2000.2 1125.4L2003.4 1125.5L2006.1 1125.1L2008.9 1125.3L2011.7 1125.1L2014.5 1125.4L2017.3 1125.3L2020.1 1124.7L2022.9 1124.8L2025.7 1124.7L2028.5 1124.6L2031.2 1124.9L2034.0 1125.3L2036.8 1125.4L2039.5 1125.3L2042.3 1125.3L2045.0 1125.3L2047.8 1125.7L2050.6 1125.7L2053.4 1126.0L2056.1 1125.5L2058.9 1125.9L2061.7 1125.4L2064.5 1125.5L2067.3 1125.5L2070.1 1125.8L2072.9 1125.7L2076.2 1126.1L2079.5 1126.6L2082.9 1127.2L2087.8 1126.5L2090.9 1125.3L2094.0 1124.0L2096.8 1123.5L2099.5 1123.6L2102.2 1123.0L2105.0 1123.0L2107.7 1122.7L2112.7 1123.7L2116.4 1126.0L2118.9 1123.5L2123.9 1124.5L2126.6 1124.0L2129.3 1123.8L2132.0 1123.7L2134.8 1123.4L2137.5 1123.2L2140.4 1123.4L2143.2 1123.7L2146.0 1124.1L2148.9 1124.1L2151.7 1124.4L2154.6 1125.0L2157.4 1125.2L2160.7 1124.8L2164.0 1124.2L2167.3 1123.7L2170.3 1123.9L2173.3 1123.6L2176.3 1123.7L2179.3 1123.1L2182.2 1123.2L2187.2 1125.0L2190.0 1125.1L2192.7 1125.1L2195.5 1125.2L2198.2 1124.7L2201.0 1124.7L2203.8 1125.1L2206.5 1124.6L2209.3 1125.1L2212.0 1124.7L2215.8 1125.2L2219.5 1125.2L2220.0 1124.8L2223.7 1124.8L2227.5 1125.3L2230.2 1124.4L2233.0 1123.8L2237.7 1120.1L2241.4 1113.6L2245.2 1110.8L2249.4 1104.3L2252.6 1104.8L2255.4 1099.6L2258.2 1087.5L2261.0 1081.0L2263.2 1086.6L2265.6 1078.6L2268.4 1088.1L2270.7 1084.3L2274.0 1083.2L2277.8 1080.1L2280.6 1087.5L2284.3 1087.0L2287.4 1086.2L2291.7 1090.7L2294.5 1090.7L2297.3 1083.8L2302.0 1083.2L2304.6 1084.6L2307.2 1085.1L2311.3 1078.2L2313.7 1065.7L2316.0 1064.2L2319.7 1068.3L2321.5 1066.6L2326.2 1070.2L2330.9 1067.6L2334.6 1075.4L2338.3 1084.3L2341.6 1083.6L2344.8 1083.8L2347.6 1078.9L2350.4 1075.4L2352.7 1077.8L2355.1 1076.0L2357.9 1079.7L2360.1 1080.1L2363.5 1087.0L2366.3 1088.4L2369.1 1084.7L2371.9 1081.4L2374.3 1083.8L2377.4 1089.7L2380.2 1088.1L2384.0 1083.8L2386.2 1084.7L2388.8 1080.4L2391.4 1084.2L2395.1 1082.5L2397.9 1084.7L2401.7 1089.9L2405.4 1091.8L2407.8 1089.4L2412.8 1097.4L2417.5 1089.0L2422.2 1090.3L2425.9 1090.9L2429.6 1087.5L2433.3 1088.1L2437.1 1086.0L2440.8 1088.4L2443.6 1089.5L2446.4 1089.4L2449.2 1085.2L2452.0 1081.4L2455.7 1080.1L2459.4 1084.3L2462.2 1083.2L2465.0 1084.3L2467.8 1083.8L2471.5 1086.2L2476.2 1089.4L2479.9 1087.5L2482.7 1090.7L2487.4 1085.1L2492.0 1088.8L2495.3 1089.3L2498.6 1088.8L2502.3 1091.2L2506.0 1088.4L2509.7 1089.4L2513.5 1088.1L2516.7 1087.1L2520.0 1087.5L2523.7 1083.2L2527.1 1075.4L2530.8 1072.0L2533.4 1060.9L2535.8 1060.1L2538.2 1058.1L2540.5 1067.0L2543.3 1067.4L2545.7 1065.2L2549.8 1069.8L2552.6 1075.8L2555.4 1068.9L2558.2 1070.7L2562.5 1064.2L2565.6 1068.9L2570.3 1074.1L2574.0 1069.4L2576.3 1073.5L2578.7 1071.7L2582.4 1075.0L2586.1 1074.1L2589.9 1075.4L2593.6 1072.6L2598.2 1068.3L2601.0 1069.8L2605.7 1069.3L2610.3 1074.1L2613.1 1072.6L2615.9 1075.4L2619.7 1073.5L2622.8 1069.3L2625.3 1070.7L2628.0 1070.7L2629.9 1073.5L2632.1 1084.7L2634.6 1080.6L2639.2 1085.6L2642.6 1082.5L2644.8 1084.3L2648.5 1081.4L2651.9 1077.8L2654.1 1079.1L2656.9 1082.9L2658.2 1081.9L2660.7 1084.2L2671.8 1084.2 L2671.8 1155.8 L170.9 1155.8 Z" fill="#0b0f20"/>
<rect x="2567.2" y="1045" width="104.6" height="110.8" fill="#0d1126"/>
<path d="M170.9 1131.0L174.1 1130.9L177.2 1130.8L180.4 1130.7L183.9 1132.4L187.3 1133.5L190.4 1133.4L193.5 1133.4L196.6 1133.3L199.7 1133.2L203.0 1132.7L206.3 1132.7L209.6 1132.5L212.4 1132.6L215.2 1132.7L218.0 1132.1L220.8 1132.3L223.6 1132.1L226.4 1132.6L229.2 1132.5L232.0 1132.0L234.8 1132.6L237.6 1132.6L240.4 1132.3L243.2 1132.2L246.9 1131.2L249.7 1131.4L252.4 1131.1L255.2 1131.1L258.0 1131.5L260.6 1132.2L263.4 1132.2L266.3 1131.8L269.1 1131.9L271.9 1131.9L274.7 1131.7L277.6 1132.0L280.4 1132.0L283.1 1132.0L285.8 1132.3L288.6 1132.1L291.3 1132.2L294.0 1132.2L296.7 1132.3L299.4 1132.2L302.1 1132.1L304.9 1132.6L307.6 1132.7L310.3 1132.6L313.0 1132.5L315.7 1132.3L318.5 1132.2L321.2 1132.3L323.9 1132.5L327.2 1131.9L330.6 1132.1L333.9 1131.6L336.7 1131.5L339.6 1131.8L342.4 1131.5L345.2 1131.9L348.0 1131.8L350.9 1131.2L353.7 1131.5L356.8 1130.3L359.9 1129.5L362.8 1130.0L365.7 1129.9L368.6 1130.1L371.5 1130.2L374.4 1129.6L377.3 1129.5L382.3 1130.1L384.9 1129.8L387.5 1130.2L390.1 1130.2L392.7 1129.9L395.3 1130.0L398.8 1130.3L402.2 1131.2L405.2 1131.0L408.2 1131.3L411.1 1131.1L414.1 1130.5L417.1 1130.7L420.2 1130.6L423.3 1130.7L426.4 1130.8L429.5 1131.2L432.2 1131.3L434.9 1130.7L437.6 1130.9L440.3 1130.7L443.0 1130.4L445.7 1130.5L449.4 1131.0L453.1 1131.2L458.1 1130.4L460.0 1131.2L463.0 1130.9L466.0 1131.3L468.9 1130.9L471.9 1131.1L474.9 1131.2L477.6 1130.7L480.3 1130.5L483.0 1130.8L485.7 1130.4L488.4 1129.8L491.1 1129.7L496.0 1122.7L501.0 1123.7L504.1 1123.3L507.2 1122.2L510.3 1122.8L513.4 1123.7L516.3 1124.3L519.2 1125.3L522.1 1125.7L525.1 1123.2L528.3 1123.7L532.0 1128.9L535.0 1128.7L539.5 1132.4L542.4 1132.1L545.3 1131.3L548.2 1131.2L552.4 1129.2L555.9 1130.0L559.4 1130.2L562.1 1130.1L564.8 1130.2L567.5 1130.6L570.1 1130.4L572.8 1130.5L575.5 1130.7L578.0 1126.7L580.5 1127.7L584.2 1126.5L589.2 1125.5L591.9 1123.7L594.7 1122.5L597.9 1124.7L602.9 1124.2L606.0 1125.4L609.1 1127.2L612.4 1126.9L615.7 1126.4L619.0 1126.2L622.0 1126.3L625.0 1126.1L628.0 1126.2L630.9 1126.5L633.9 1126.2L637.4 1125.2L640.9 1124.2L643.9 1125.2L648.8 1124.2L651.7 1124.0L654.5 1123.7L657.5 1116.0L660.0 1115.3L663.7 1106.8L667.5 1095.4L669.9 1102.9L674.2 1106.1L679.1 1113.8L681.1 1107.3L683.6 1106.3L686.6 1101.4L688.6 1101.9L691.6 1105.8L693.5 1101.4L696.0 1102.4L699.8 1106.1L703.0 1103.9L706.0 1103.9L709.7 1112.3L712.9 1121.0L715.4 1115.3L717.4 1114.3L720.4 1117.8L723.4 1113.3L728.3 1115.3L732.8 1118.8L736.3 1117.8L739.5 1117.3L743.2 1118.5L747.0 1119.3L749.4 1124.2L752.7 1122.2L756.9 1122.2L760.6 1121.0L764.3 1121.6L768.1 1122.7L771.4 1122.7L774.7 1123.5L778.0 1123.5L783.0 1125.2L786.7 1124.2L790.4 1122.7L794.2 1119.8L797.3 1119.9L800.4 1120.5L803.5 1119.0L806.6 1118.0L810.3 1114.3L814.0 1108.1L816.5 1111.1L820.2 1109.3L824.0 1109.3L827.7 1110.8L832.7 1110.3L837.1 1107.3L841.4 1111.8L844.5 1112.3L847.6 1112.5L852.5 1112.3L857.5 1116.5L861.2 1115.3L866.2 1116.3L869.3 1114.6L872.4 1112.3L877.4 1112.3L879.9 1110.6L883.6 1110.8L887.3 1111.6L890.6 1112.1L894.0 1112.3L897.3 1112.3L901.7 1113.3L905.1 1111.9L908.4 1110.3L910.2 1111.3L913.4 1108.1L915.9 1110.1L920.9 1110.1L925.8 1113.0L928.3 1112.3L932.0 1113.3L935.0 1115.3L938.5 1114.7L942.0 1114.3L944.5 1118.5L949.4 1116.8L953.2 1118.3L958.1 1119.3L961.9 1118.3L965.6 1114.8L969.3 1115.3L973.0 1118.0L978.0 1117.3L981.7 1118.5L986.7 1119.8L990.4 1118.5L993.5 1118.9L996.6 1119.8L1001.6 1122.5L1004.3 1122.2L1007.1 1122.9L1009.8 1122.5L1012.5 1122.8L1015.3 1122.7L1019.0 1121.0L1022.0 1117.3L1025.2 1118.3L1028.3 1118.1L1031.4 1118.3L1034.7 1119.4L1038.1 1120.2L1041.4 1121.0L1046.3 1119.3L1049.4 1119.7L1052.5 1120.5L1055.4 1119.9L1058.3 1119.8L1061.2 1119.3L1064.1 1118.7L1067.0 1118.5L1069.9 1118.4L1072.8 1118.3L1075.7 1117.9L1078.6 1117.5L1081.9 1117.5L1085.3 1118.1L1088.6 1118.0L1091.9 1118.5L1095.2 1119.0L1098.5 1120.0L1100.0 1119.3L1103.1 1119.1L1106.2 1119.3L1109.0 1120.1L1111.8 1120.7L1114.6 1121.6L1117.4 1122.7L1120.7 1122.9L1124.0 1123.3L1127.3 1123.5L1132.3 1127.2L1135.2 1127.0L1138.1 1127.3L1141.0 1127.7L1143.9 1127.9L1146.8 1127.7L1149.7 1127.7L1152.7 1127.7L1155.7 1127.6L1158.6 1127.2L1161.6 1127.0L1164.6 1127.2L1167.9 1127.5L1171.2 1128.8L1174.5 1129.2L1178.3 1129.3L1182.0 1129.2L1187.0 1128.2L1189.8 1128.7L1192.6 1128.1L1195.5 1128.7L1198.3 1128.8L1201.2 1129.1L1204.0 1128.9L1206.8 1129.2L1209.6 1129.4L1212.4 1128.5L1215.2 1128.7L1218.0 1128.6L1220.8 1128.5L1223.6 1128.2L1226.4 1128.0L1229.2 1127.7L1232.0 1128.0L1234.9 1128.2L1237.7 1127.9L1240.6 1128.3L1243.4 1128.5L1246.2 1128.6L1249.1 1128.4L1251.8 1128.4L1254.6 1128.8L1257.3 1128.9L1260.1 1128.7L1262.9 1128.8L1265.6 1128.7L1268.4 1128.9L1271.2 1129.0L1273.9 1128.9L1276.9 1128.6L1279.9 1128.8L1282.9 1129.0L1285.8 1128.8L1288.8 1128.4L1291.9 1127.1L1295.0 1125.5L1297.9 1125.6L1300.8 1126.1L1303.7 1126.2L1307.0 1125.9L1310.4 1125.3L1313.7 1125.0L1316.6 1125.5L1319.6 1125.2L1322.6 1125.9L1325.6 1125.6L1328.6 1126.2L1331.6 1126.2L1334.5 1126.1L1337.5 1125.9L1340.5 1126.2L1343.5 1126.0L1347.2 1125.2L1350.3 1126.7L1353.4 1128.2L1356.7 1128.3L1360.0 1128.5L1363.4 1128.2L1366.7 1127.7L1370.0 1127.2L1373.3 1127.2L1376.2 1127.1L1379.1 1127.4L1382.0 1127.1L1384.9 1127.1L1387.8 1127.7L1390.7 1127.5L1394.4 1128.1L1398.1 1128.4L1401.0 1128.5L1403.8 1128.9L1406.7 1128.5L1409.5 1128.8L1412.3 1128.6L1415.2 1128.8L1418.0 1128.9L1421.1 1128.8L1424.2 1128.6L1427.3 1128.3L1430.4 1127.7L1433.4 1127.5L1436.4 1127.5L1439.4 1127.1L1442.4 1126.9L1445.3 1127.0L1448.4 1127.1L1451.6 1127.4L1454.7 1127.6L1457.8 1127.5L1461.1 1127.8L1464.4 1128.3L1467.7 1128.2L1470.5 1128.0L1473.4 1127.8L1476.2 1128.0L1479.1 1127.8L1481.9 1127.6L1484.7 1127.7L1487.6 1127.7L1490.4 1127.9L1493.3 1127.8L1496.1 1127.8L1498.9 1128.2L1501.8 1128.4L1504.6 1128.1L1507.5 1128.2L1510.8 1127.1L1514.1 1126.2L1517.4 1125.7L1520.4 1124.7L1524.8 1125.5L1527.5 1125.6L1530.2 1125.0L1532.9 1125.4L1535.6 1125.2L1538.3 1124.9L1541.0 1125.0L1544.1 1125.8L1547.2 1126.2L1550.1 1125.8L1553.0 1125.8L1555.9 1125.9L1558.8 1125.5L1561.7 1126.0L1564.6 1125.7L1568.3 1126.3L1572.0 1127.2L1575.0 1126.8L1578.0 1126.5L1581.0 1126.7L1584.0 1126.4L1587.0 1126.2L1590.1 1125.9L1593.2 1125.6L1596.3 1125.3L1599.4 1124.7L1602.5 1125.3L1605.6 1125.3L1608.7 1125.3L1611.8 1125.7L1614.9 1125.6L1618.0 1125.4L1621.1 1125.2L1624.2 1125.5L1627.5 1125.6L1630.8 1125.9L1634.2 1126.0L1637.1 1125.6L1640.1 1125.6L1643.1 1125.5L1646.1 1125.5L1648.6 1120.2L1651.6 1119.8L1654.5 1119.0L1657.4 1119.8L1660.2 1120.5L1663.0 1120.7L1665.8 1120.9L1668.6 1120.8L1671.4 1121.0L1676.4 1122.5L1679.7 1122.7L1683.0 1122.8L1686.3 1122.5L1690.1 1125.2L1692.8 1124.8L1695.5 1125.3L1698.3 1125.1L1701.0 1124.6L1703.7 1124.7L1706.6 1124.8L1709.5 1125.1L1712.4 1125.4L1715.3 1125.1L1718.2 1125.4L1721.1 1125.5L1724.0 1125.7L1726.9 1125.6L1729.8 1125.7L1732.7 1125.3L1735.6 1125.4L1738.5 1125.2L1740.0 1125.2L1742.8 1125.1L1745.6 1125.5L1748.4 1125.6L1751.2 1125.6L1754.0 1125.7L1756.8 1125.4L1759.6 1125.9L1762.4 1125.7L1765.3 1125.8L1768.3 1125.5L1771.3 1124.8L1774.3 1124.7L1777.3 1124.2L1780.6 1123.2L1783.9 1122.7L1787.2 1121.5L1790.3 1122.1L1793.4 1122.0L1796.5 1122.1L1799.6 1122.7L1802.7 1123.2L1805.8 1123.7L1808.5 1123.6L1811.1 1123.5L1813.8 1123.2L1816.4 1122.7L1819.0 1123.0L1821.7 1122.3L1824.3 1122.6L1827.0 1122.2L1830.1 1122.3L1833.2 1122.6L1836.3 1123.2L1839.4 1123.2L1842.7 1122.7L1846.0 1122.5L1849.3 1122.5L1852.4 1122.9L1855.5 1123.5L1858.6 1124.0L1861.7 1124.2L1864.6 1124.4L1867.5 1124.7L1870.4 1124.5L1873.3 1124.9L1876.2 1124.3L1879.1 1124.7L1882.0 1124.6L1884.8 1124.9L1887.6 1124.8L1890.5 1125.2L1893.3 1125.2L1896.2 1125.2L1899.0 1125.2L1901.8 1125.4L1904.6 1125.1L1907.4 1124.9L1910.2 1124.9L1913.0 1125.1L1915.8 1125.1L1918.6 1124.6L1921.4 1124.7L1924.3 1124.1L1927.2 1123.4L1930.1 1122.2L1933.2 1122.6L1936.3 1123.0L1940.7 1121.2L1945.0 1123.2L1947.8 1123.1L1950.6 1122.6L1953.4 1122.7L1956.1 1122.5L1959.3 1122.8L1962.4 1123.2L1965.5 1123.1L1968.6 1123.7L1972.0 1123.7L1975.5 1123.0L1978.5 1126.0L1981.6 1125.7L1984.7 1125.3L1987.8 1125.2L1990.9 1124.7L1994.0 1125.0L1997.1 1125.1L2000.2 1125.4L2003.4 1125.5L2006.1 1125.1L2008.9 1125.3L2011.7 1125.1L2014.5 1125.4L2017.3 1125.3L2020.1 1124.7L2022.9 1124.8L2025.7 1124.7L2028.5 1124.6L2031.2 1124.9L2034.0 1125.3L2036.8 1125.4L2039.5 1125.3L2042.3 1125.3L2045.0 1125.3L2047.8 1125.7L2050.6 1125.7L2053.4 1126.0L2056.1 1125.5L2058.9 1125.9L2061.7 1125.4L2064.5 1125.5L2067.3 1125.5L2070.1 1125.8L2072.9 1125.7L2076.2 1126.1L2079.5 1126.6L2082.9 1127.2L2087.8 1126.5L2090.9 1125.3L2094.0 1124.0L2096.8 1123.5L2099.5 1123.6L2102.2 1123.0L2105.0 1123.0L2107.7 1122.7L2112.7 1123.7L2116.4 1126.0L2118.9 1123.5L2123.9 1124.5L2126.6 1124.0L2129.3 1123.8L2132.0 1123.7L2134.8 1123.4L2137.5 1123.2L2140.4 1123.4L2143.2 1123.7L2146.0 1124.1L2148.9 1124.1L2151.7 1124.4L2154.6 1125.0L2157.4 1125.2L2160.7 1124.8L2164.0 1124.2L2167.3 1123.7L2170.3 1123.9L2173.3 1123.6L2176.3 1123.7L2179.3 1123.1L2182.2 1123.2L2187.2 1125.0L2190.0 1125.1L2192.7 1125.1L2195.5 1125.2L2198.2 1124.7L2201.0 1124.7L2203.8 1125.1L2206.5 1124.6L2209.3 1125.1L2212.0 1124.7L2215.8 1125.2L2219.5 1125.2L2220.0 1124.8L2223.7 1124.8L2227.5 1125.3L2230.2 1124.4L2233.0 1123.8L2237.7 1120.1L2241.4 1113.6L2245.2 1110.8L2249.4 1104.3L2252.6 1104.8L2255.4 1099.6L2258.2 1087.5L2261.0 1081.0L2263.2 1086.6L2265.6 1078.6L2268.4 1088.1L2270.7 1084.3L2274.0 1083.2L2277.8 1080.1L2280.6 1087.5L2284.3 1087.0L2287.4 1086.2L2291.7 1090.7L2294.5 1090.7L2297.3 1083.8L2302.0 1083.2L2304.6 1084.6L2307.2 1085.1L2311.3 1078.2L2313.7 1065.7L2316.0 1064.2L2319.7 1068.3L2321.5 1066.6L2326.2 1070.2L2330.9 1067.6L2334.6 1075.4L2338.3 1084.3L2341.6 1083.6L2344.8 1083.8L2347.6 1078.9L2350.4 1075.4L2352.7 1077.8L2355.1 1076.0L2357.9 1079.7L2360.1 1080.1L2363.5 1087.0L2366.3 1088.4L2369.1 1084.7L2371.9 1081.4L2374.3 1083.8L2377.4 1089.7L2380.2 1088.1L2384.0 1083.8L2386.2 1084.7L2388.8 1080.4L2391.4 1084.2L2395.1 1082.5L2397.9 1084.7L2401.7 1089.9L2405.4 1091.8L2407.8 1089.4L2412.8 1097.4L2417.5 1089.0L2422.2 1090.3L2425.9 1090.9L2429.6 1087.5L2433.3 1088.1L2437.1 1086.0L2440.8 1088.4L2443.6 1089.5L2446.4 1089.4L2449.2 1085.2L2452.0 1081.4L2455.7 1080.1L2459.4 1084.3L2462.2 1083.2L2465.0 1084.3L2467.8 1083.8L2471.5 1086.2L2476.2 1089.4L2479.9 1087.5L2482.7 1090.7L2487.4 1085.1L2492.0 1088.8L2495.3 1089.3L2498.6 1088.8L2502.3 1091.2L2506.0 1088.4L2509.7 1089.4L2513.5 1088.1L2516.7 1087.1L2520.0 1087.5L2523.7 1083.2L2527.1 1075.4L2530.8 1072.0L2533.4 1060.9L2535.8 1060.1L2538.2 1058.1L2540.5 1067.0L2543.3 1067.4L2545.7 1065.2L2549.8 1069.8L2552.6 1075.8L2555.4 1068.9L2558.2 1070.7L2562.5 1064.2L2565.6 1068.9L2570.3 1074.1L2574.0 1069.4L2576.3 1073.5L2578.7 1071.7L2582.4 1075.0L2586.1 1074.1L2589.9 1075.4L2593.6 1072.6L2598.2 1068.3L2601.0 1069.8L2605.7 1069.3L2610.3 1074.1L2613.1 1072.6L2615.9 1075.4L2619.7 1073.5L2622.8 1069.3L2625.3 1070.7L2628.0 1070.7L2629.9 1073.5L2632.1 1084.7L2634.6 1080.6L2639.2 1085.6L2642.6 1082.5L2644.8 1084.3L2648.5 1081.4L2651.9 1077.8L2654.1 1079.1L2656.9 1082.9L2658.2 1081.9L2660.7 1084.2L2671.8 1084.2 L2671.8 1155.8 L170.9 1155.8 Z" fill="#222a48" clip-path="url(#win)"/>
<path d="M170.9 1131.0L174.1 1130.9L177.2 1130.8L180.4 1130.7L183.9 1132.4L187.3 1133.5L190.4 1133.4L193.5 1133.4L196.6 1133.3L199.7 1133.2L203.0 1132.7L206.3 1132.7L209.6 1132.5L212.4 1132.6L215.2 1132.7L218.0 1132.1L220.8 1132.3L223.6 1132.1L226.4 1132.6L229.2 1132.5L232.0 1132.0L234.8 1132.6L237.6 1132.6L240.4 1132.3L243.2 1132.2L246.9 1131.2L249.7 1131.4L252.4 1131.1L255.2 1131.1L258.0 1131.5L260.6 1132.2L263.4 1132.2L266.3 1131.8L269.1 1131.9L271.9 1131.9L274.7 1131.7L277.6 1132.0L280.4 1132.0L283.1 1132.0L285.8 1132.3L288.6 1132.1L291.3 1132.2L294.0 1132.2L296.7 1132.3L299.4 1132.2L302.1 1132.1L304.9 1132.6L307.6 1132.7L310.3 1132.6L313.0 1132.5L315.7 1132.3L318.5 1132.2L321.2 1132.3L323.9 1132.5L327.2 1131.9L330.6 1132.1L333.9 1131.6L336.7 1131.5L339.6 1131.8L342.4 1131.5L345.2 1131.9L348.0 1131.8L350.9 1131.2L353.7 1131.5L356.8 1130.3L359.9 1129.5L362.8 1130.0L365.7 1129.9L368.6 1130.1L371.5 1130.2L374.4 1129.6L377.3 1129.5L382.3 1130.1L384.9 1129.8L387.5 1130.2L390.1 1130.2L392.7 1129.9L395.3 1130.0L398.8 1130.3L402.2 1131.2L405.2 1131.0L408.2 1131.3L411.1 1131.1L414.1 1130.5L417.1 1130.7L420.2 1130.6L423.3 1130.7L426.4 1130.8L429.5 1131.2L432.2 1131.3L434.9 1130.7L437.6 1130.9L440.3 1130.7L443.0 1130.4L445.7 1130.5L449.4 1131.0L453.1 1131.2L458.1 1130.4L460.0 1131.2L463.0 1130.9L466.0 1131.3L468.9 1130.9L471.9 1131.1L474.9 1131.2L477.6 1130.7L480.3 1130.5L483.0 1130.8L485.7 1130.4L488.4 1129.8L491.1 1129.7L496.0 1122.7L501.0 1123.7L504.1 1123.3L507.2 1122.2L510.3 1122.8L513.4 1123.7L516.3 1124.3L519.2 1125.3L522.1 1125.7L525.1 1123.2L528.3 1123.7L532.0 1128.9L535.0 1128.7L539.5 1132.4L542.4 1132.1L545.3 1131.3L548.2 1131.2L552.4 1129.2L555.9 1130.0L559.4 1130.2L562.1 1130.1L564.8 1130.2L567.5 1130.6L570.1 1130.4L572.8 1130.5L575.5 1130.7L578.0 1126.7L580.5 1127.7L584.2 1126.5L589.2 1125.5L591.9 1123.7L594.7 1122.5L597.9 1124.7L602.9 1124.2L606.0 1125.4L609.1 1127.2L612.4 1126.9L615.7 1126.4L619.0 1126.2L622.0 1126.3L625.0 1126.1L628.0 1126.2L630.9 1126.5L633.9 1126.2L637.4 1125.2L640.9 1124.2L643.9 1125.2L648.8 1124.2L651.7 1124.0L654.5 1123.7L657.5 1116.0L660.0 1115.3L663.7 1106.8L667.5 1095.4L669.9 1102.9L674.2 1106.1L679.1 1113.8L681.1 1107.3L683.6 1106.3L686.6 1101.4L688.6 1101.9L691.6 1105.8L693.5 1101.4L696.0 1102.4L699.8 1106.1L703.0 1103.9L706.0 1103.9L709.7 1112.3L712.9 1121.0L715.4 1115.3L717.4 1114.3L720.4 1117.8L723.4 1113.3L728.3 1115.3L732.8 1118.8L736.3 1117.8L739.5 1117.3L743.2 1118.5L747.0 1119.3L749.4 1124.2L752.7 1122.2L756.9 1122.2L760.6 1121.0L764.3 1121.6L768.1 1122.7L771.4 1122.7L774.7 1123.5L778.0 1123.5L783.0 1125.2L786.7 1124.2L790.4 1122.7L794.2 1119.8L797.3 1119.9L800.4 1120.5L803.5 1119.0L806.6 1118.0L810.3 1114.3L814.0 1108.1L816.5 1111.1L820.2 1109.3L824.0 1109.3L827.7 1110.8L832.7 1110.3L837.1 1107.3L841.4 1111.8L844.5 1112.3L847.6 1112.5L852.5 1112.3L857.5 1116.5L861.2 1115.3L866.2 1116.3L869.3 1114.6L872.4 1112.3L877.4 1112.3L879.9 1110.6L883.6 1110.8L887.3 1111.6L890.6 1112.1L894.0 1112.3L897.3 1112.3L901.7 1113.3L905.1 1111.9L908.4 1110.3L910.2 1111.3L913.4 1108.1L915.9 1110.1L920.9 1110.1L925.8 1113.0L928.3 1112.3L932.0 1113.3L935.0 1115.3L938.5 1114.7L942.0 1114.3L944.5 1118.5L949.4 1116.8L953.2 1118.3L958.1 1119.3L961.9 1118.3L965.6 1114.8L969.3 1115.3L973.0 1118.0L978.0 1117.3L981.7 1118.5L986.7 1119.8L990.4 1118.5L993.5 1118.9L996.6 1119.8L1001.6 1122.5L1004.3 1122.2L1007.1 1122.9L1009.8 1122.5L1012.5 1122.8L1015.3 1122.7L1019.0 1121.0L1022.0 1117.3L1025.2 1118.3L1028.3 1118.1L1031.4 1118.3L1034.7 1119.4L1038.1 1120.2L1041.4 1121.0L1046.3 1119.3L1049.4 1119.7L1052.5 1120.5L1055.4 1119.9L1058.3 1119.8L1061.2 1119.3L1064.1 1118.7L1067.0 1118.5L1069.9 1118.4L1072.8 1118.3L1075.7 1117.9L1078.6 1117.5L1081.9 1117.5L1085.3 1118.1L1088.6 1118.0L1091.9 1118.5L1095.2 1119.0L1098.5 1120.0L1100.0 1119.3L1103.1 1119.1L1106.2 1119.3L1109.0 1120.1L1111.8 1120.7L1114.6 1121.6L1117.4 1122.7L1120.7 1122.9L1124.0 1123.3L1127.3 1123.5L1132.3 1127.2L1135.2 1127.0L1138.1 1127.3L1141.0 1127.7L1143.9 1127.9L1146.8 1127.7L1149.7 1127.7L1152.7 1127.7L1155.7 1127.6L1158.6 1127.2L1161.6 1127.0L1164.6 1127.2L1167.9 1127.5L1171.2 1128.8L1174.5 1129.2L1178.3 1129.3L1182.0 1129.2L1187.0 1128.2L1189.8 1128.7L1192.6 1128.1L1195.5 1128.7L1198.3 1128.8L1201.2 1129.1L1204.0 1128.9L1206.8 1129.2L1209.6 1129.4L1212.4 1128.5L1215.2 1128.7L1218.0 1128.6L1220.8 1128.5L1223.6 1128.2L1226.4 1128.0L1229.2 1127.7L1232.0 1128.0L1234.9 1128.2L1237.7 1127.9L1240.6 1128.3L1243.4 1128.5L1246.2 1128.6L1249.1 1128.4L1251.8 1128.4L1254.6 1128.8L1257.3 1128.9L1260.1 1128.7L1262.9 1128.8L1265.6 1128.7L1268.4 1128.9L1271.2 1129.0L1273.9 1128.9L1276.9 1128.6L1279.9 1128.8L1282.9 1129.0L1285.8 1128.8L1288.8 1128.4L1291.9 1127.1L1295.0 1125.5L1297.9 1125.6L1300.8 1126.1L1303.7 1126.2L1307.0 1125.9L1310.4 1125.3L1313.7 1125.0L1316.6 1125.5L1319.6 1125.2L1322.6 1125.9L1325.6 1125.6L1328.6 1126.2L1331.6 1126.2L1334.5 1126.1L1337.5 1125.9L1340.5 1126.2L1343.5 1126.0L1347.2 1125.2L1350.3 1126.7L1353.4 1128.2L1356.7 1128.3L1360.0 1128.5L1363.4 1128.2L1366.7 1127.7L1370.0 1127.2L1373.3 1127.2L1376.2 1127.1L1379.1 1127.4L1382.0 1127.1L1384.9 1127.1L1387.8 1127.7L1390.7 1127.5L1394.4 1128.1L1398.1 1128.4L1401.0 1128.5L1403.8 1128.9L1406.7 1128.5L1409.5 1128.8L1412.3 1128.6L1415.2 1128.8L1418.0 1128.9L1421.1 1128.8L1424.2 1128.6L1427.3 1128.3L1430.4 1127.7L1433.4 1127.5L1436.4 1127.5L1439.4 1127.1L1442.4 1126.9L1445.3 1127.0L1448.4 1127.1L1451.6 1127.4L1454.7 1127.6L1457.8 1127.5L1461.1 1127.8L1464.4 1128.3L1467.7 1128.2L1470.5 1128.0L1473.4 1127.8L1476.2 1128.0L1479.1 1127.8L1481.9 1127.6L1484.7 1127.7L1487.6 1127.7L1490.4 1127.9L1493.3 1127.8L1496.1 1127.8L1498.9 1128.2L1501.8 1128.4L1504.6 1128.1L1507.5 1128.2L1510.8 1127.1L1514.1 1126.2L1517.4 1125.7L1520.4 1124.7L1524.8 1125.5L1527.5 1125.6L1530.2 1125.0L1532.9 1125.4L1535.6 1125.2L1538.3 1124.9L1541.0 1125.0L1544.1 1125.8L1547.2 1126.2L1550.1 1125.8L1553.0 1125.8L1555.9 1125.9L1558.8 1125.5L1561.7 1126.0L1564.6 1125.7L1568.3 1126.3L1572.0 1127.2L1575.0 1126.8L1578.0 1126.5L1581.0 1126.7L1584.0 1126.4L1587.0 1126.2L1590.1 1125.9L1593.2 1125.6L1596.3 1125.3L1599.4 1124.7L1602.5 1125.3L1605.6 1125.3L1608.7 1125.3L1611.8 1125.7L1614.9 1125.6L1618.0 1125.4L1621.1 1125.2L1624.2 1125.5L1627.5 1125.6L1630.8 1125.9L1634.2 1126.0L1637.1 1125.6L1640.1 1125.6L1643.1 1125.5L1646.1 1125.5L1648.6 1120.2L1651.6 1119.8L1654.5 1119.0L1657.4 1119.8L1660.2 1120.5L1663.0 1120.7L1665.8 1120.9L1668.6 1120.8L1671.4 1121.0L1676.4 1122.5L1679.7 1122.7L1683.0 1122.8L1686.3 1122.5L1690.1 1125.2L1692.8 1124.8L1695.5 1125.3L1698.3 1125.1L1701.0 1124.6L1703.7 1124.7L1706.6 1124.8L1709.5 1125.1L1712.4 1125.4L1715.3 1125.1L1718.2 1125.4L1721.1 1125.5L1724.0 1125.7L1726.9 1125.6L1729.8 1125.7L1732.7 1125.3L1735.6 1125.4L1738.5 1125.2L1740.0 1125.2L1742.8 1125.1L1745.6 1125.5L1748.4 1125.6L1751.2 1125.6L1754.0 1125.7L1756.8 1125.4L1759.6 1125.9L1762.4 1125.7L1765.3 1125.8L1768.3 1125.5L1771.3 1124.8L1774.3 1124.7L1777.3 1124.2L1780.6 1123.2L1783.9 1122.7L1787.2 1121.5L1790.3 1122.1L1793.4 1122.0L1796.5 1122.1L1799.6 1122.7L1802.7 1123.2L1805.8 1123.7L1808.5 1123.6L1811.1 1123.5L1813.8 1123.2L1816.4 1122.7L1819.0 1123.0L1821.7 1122.3L1824.3 1122.6L1827.0 1122.2L1830.1 1122.3L1833.2 1122.6L1836.3 1123.2L1839.4 1123.2L1842.7 1122.7L1846.0 1122.5L1849.3 1122.5L1852.4 1122.9L1855.5 1123.5L1858.6 1124.0L1861.7 1124.2L1864.6 1124.4L1867.5 1124.7L1870.4 1124.5L1873.3 1124.9L1876.2 1124.3L1879.1 1124.7L1882.0 1124.6L1884.8 1124.9L1887.6 1124.8L1890.5 1125.2L1893.3 1125.2L1896.2 1125.2L1899.0 1125.2L1901.8 1125.4L1904.6 1125.1L1907.4 1124.9L1910.2 1124.9L1913.0 1125.1L1915.8 1125.1L1918.6 1124.6L1921.4 1124.7L1924.3 1124.1L1927.2 1123.4L1930.1 1122.2L1933.2 1122.6L1936.3 1123.0L1940.7 1121.2L1945.0 1123.2L1947.8 1123.1L1950.6 1122.6L1953.4 1122.7L1956.1 1122.5L1959.3 1122.8L1962.4 1123.2L1965.5 1123.1L1968.6 1123.7L1972.0 1123.7L1975.5 1123.0L1978.5 1126.0L1981.6 1125.7L1984.7 1125.3L1987.8 1125.2L1990.9 1124.7L1994.0 1125.0L1997.1 1125.1L2000.2 1125.4L2003.4 1125.5L2006.1 1125.1L2008.9 1125.3L2011.7 1125.1L2014.5 1125.4L2017.3 1125.3L2020.1 1124.7L2022.9 1124.8L2025.7 1124.7L2028.5 1124.6L2031.2 1124.9L2034.0 1125.3L2036.8 1125.4L2039.5 1125.3L2042.3 1125.3L2045.0 1125.3L2047.8 1125.7L2050.6 1125.7L2053.4 1126.0L2056.1 1125.5L2058.9 1125.9L2061.7 1125.4L2064.5 1125.5L2067.3 1125.5L2070.1 1125.8L2072.9 1125.7L2076.2 1126.1L2079.5 1126.6L2082.9 1127.2L2087.8 1126.5L2090.9 1125.3L2094.0 1124.0L2096.8 1123.5L2099.5 1123.6L2102.2 1123.0L2105.0 1123.0L2107.7 1122.7L2112.7 1123.7L2116.4 1126.0L2118.9 1123.5L2123.9 1124.5L2126.6 1124.0L2129.3 1123.8L2132.0 1123.7L2134.8 1123.4L2137.5 1123.2L2140.4 1123.4L2143.2 1123.7L2146.0 1124.1L2148.9 1124.1L2151.7 1124.4L2154.6 1125.0L2157.4 1125.2L2160.7 1124.8L2164.0 1124.2L2167.3 1123.7L2170.3 1123.9L2173.3 1123.6L2176.3 1123.7L2179.3 1123.1L2182.2 1123.2L2187.2 1125.0L2190.0 1125.1L2192.7 1125.1L2195.5 1125.2L2198.2 1124.7L2201.0 1124.7L2203.8 1125.1L2206.5 1124.6L2209.3 1125.1L2212.0 1124.7L2215.8 1125.2L2219.5 1125.2L2220.0 1124.8L2223.7 1124.8L2227.5 1125.3L2230.2 1124.4L2233.0 1123.8L2237.7 1120.1L2241.4 1113.6L2245.2 1110.8L2249.4 1104.3L2252.6 1104.8L2255.4 1099.6L2258.2 1087.5L2261.0 1081.0L2263.2 1086.6L2265.6 1078.6L2268.4 1088.1L2270.7 1084.3L2274.0 1083.2L2277.8 1080.1L2280.6 1087.5L2284.3 1087.0L2287.4 1086.2L2291.7 1090.7L2294.5 1090.7L2297.3 1083.8L2302.0 1083.2L2304.6 1084.6L2307.2 1085.1L2311.3 1078.2L2313.7 1065.7L2316.0 1064.2L2319.7 1068.3L2321.5 1066.6L2326.2 1070.2L2330.9 1067.6L2334.6 1075.4L2338.3 1084.3L2341.6 1083.6L2344.8 1083.8L2347.6 1078.9L2350.4 1075.4L2352.7 1077.8L2355.1 1076.0L2357.9 1079.7L2360.1 1080.1L2363.5 1087.0L2366.3 1088.4L2369.1 1084.7L2371.9 1081.4L2374.3 1083.8L2377.4 1089.7L2380.2 1088.1L2384.0 1083.8L2386.2 1084.7L2388.8 1080.4L2391.4 1084.2L2395.1 1082.5L2397.9 1084.7L2401.7 1089.9L2405.4 1091.8L2407.8 1089.4L2412.8 1097.4L2417.5 1089.0L2422.2 1090.3L2425.9 1090.9L2429.6 1087.5L2433.3 1088.1L2437.1 1086.0L2440.8 1088.4L2443.6 1089.5L2446.4 1089.4L2449.2 1085.2L2452.0 1081.4L2455.7 1080.1L2459.4 1084.3L2462.2 1083.2L2465.0 1084.3L2467.8 1083.8L2471.5 1086.2L2476.2 1089.4L2479.9 1087.5L2482.7 1090.7L2487.4 1085.1L2492.0 1088.8L2495.3 1089.3L2498.6 1088.8L2502.3 1091.2L2506.0 1088.4L2509.7 1089.4L2513.5 1088.1L2516.7 1087.1L2520.0 1087.5L2523.7 1083.2L2527.1 1075.4L2530.8 1072.0L2533.4 1060.9L2535.8 1060.1L2538.2 1058.1L2540.5 1067.0L2543.3 1067.4L2545.7 1065.2L2549.8 1069.8L2552.6 1075.8L2555.4 1068.9L2558.2 1070.7L2562.5 1064.2L2565.6 1068.9L2570.3 1074.1L2574.0 1069.4L2576.3 1073.5L2578.7 1071.7L2582.4 1075.0L2586.1 1074.1L2589.9 1075.4L2593.6 1072.6L2598.2 1068.3L2601.0 1069.8L2605.7 1069.3L2610.3 1074.1L2613.1 1072.6L2615.9 1075.4L2619.7 1073.5L2622.8 1069.3L2625.3 1070.7L2628.0 1070.7L2629.9 1073.5L2632.1 1084.7L2634.6 1080.6L2639.2 1085.6L2642.6 1082.5L2644.8 1084.3L2648.5 1081.4L2651.9 1077.8L2654.1 1079.1L2656.9 1082.9L2658.2 1081.9L2660.7 1084.2" fill="none" stroke="#4568cc" stroke-width="1.2" stroke-linejoin="round"/>
<path d="M170.9 1131.0L174.1 1130.9L177.2 1130.8L180.4 1130.7L183.9 1132.4L187.3 1133.5L190.4 1133.4L193.5 1133.4L196.6 1133.3L199.7 1133.2L203.0 1132.7L206.3 1132.7L209.6 1132.5L212.4 1132.6L215.2 1132.7L218.0 1132.1L220.8 1132.3L223.6 1132.1L226.4 1132.6L229.2 1132.5L232.0 1132.0L234.8 1132.6L237.6 1132.6L240.4 1132.3L243.2 1132.2L246.9 1131.2L249.7 1131.4L252.4 1131.1L255.2 1131.1L258.0 1131.5L260.6 1132.2L263.4 1132.2L266.3 1131.8L269.1 1131.9L271.9 1131.9L274.7 1131.7L277.6 1132.0L280.4 1132.0L283.1 1132.0L285.8 1132.3L288.6 1132.1L291.3 1132.2L294.0 1132.2L296.7 1132.3L299.4 1132.2L302.1 1132.1L304.9 1132.6L307.6 1132.7L310.3 1132.6L313.0 1132.5L315.7 1132.3L318.5 1132.2L321.2 1132.3L323.9 1132.5L327.2 1131.9L330.6 1132.1L333.9 1131.6L336.7 1131.5L339.6 1131.8L342.4 1131.5L345.2 1131.9L348.0 1131.8L350.9 1131.2L353.7 1131.5L356.8 1130.3L359.9 1129.5L362.8 1130.0L365.7 1129.9L368.6 1130.1L371.5 1130.2L374.4 1129.6L377.3 1129.5L382.3 1130.1L384.9 1129.8L387.5 1130.2L390.1 1130.2L392.7 1129.9L395.3 1130.0L398.8 1130.3L402.2 1131.2L405.2 1131.0L408.2 1131.3L411.1 1131.1L414.1 1130.5L417.1 1130.7L420.2 1130.6L423.3 1130.7L426.4 1130.8L429.5 1131.2L432.2 1131.3L434.9 1130.7L437.6 1130.9L440.3 1130.7L443.0 1130.4L445.7 1130.5L449.4 1131.0L453.1 1131.2L458.1 1130.4L460.0 1131.2L463.0 1130.9L466.0 1131.3L468.9 1130.9L471.9 1131.1L474.9 1131.2L477.6 1130.7L480.3 1130.5L483.0 1130.8L485.7 1130.4L488.4 1129.8L491.1 1129.7L496.0 1122.7L501.0 1123.7L504.1 1123.3L507.2 1122.2L510.3 1122.8L513.4 1123.7L516.3 1124.3L519.2 1125.3L522.1 1125.7L525.1 1123.2L528.3 1123.7L532.0 1128.9L535.0 1128.7L539.5 1132.4L542.4 1132.1L545.3 1131.3L548.2 1131.2L552.4 1129.2L555.9 1130.0L559.4 1130.2L562.1 1130.1L564.8 1130.2L567.5 1130.6L570.1 1130.4L572.8 1130.5L575.5 1130.7L578.0 1126.7L580.5 1127.7L584.2 1126.5L589.2 1125.5L591.9 1123.7L594.7 1122.5L597.9 1124.7L602.9 1124.2L606.0 1125.4L609.1 1127.2L612.4 1126.9L615.7 1126.4L619.0 1126.2L622.0 1126.3L625.0 1126.1L628.0 1126.2L630.9 1126.5L633.9 1126.2L637.4 1125.2L640.9 1124.2L643.9 1125.2L648.8 1124.2L651.7 1124.0L654.5 1123.7L657.5 1116.0L660.0 1115.3L663.7 1106.8L667.5 1095.4L669.9 1102.9L674.2 1106.1L679.1 1113.8L681.1 1107.3L683.6 1106.3L686.6 1101.4L688.6 1101.9L691.6 1105.8L693.5 1101.4L696.0 1102.4L699.8 1106.1L703.0 1103.9L706.0 1103.9L709.7 1112.3L712.9 1121.0L715.4 1115.3L717.4 1114.3L720.4 1117.8L723.4 1113.3L728.3 1115.3L732.8 1118.8L736.3 1117.8L739.5 1117.3L743.2 1118.5L747.0 1119.3L749.4 1124.2L752.7 1122.2L756.9 1122.2L760.6 1121.0L764.3 1121.6L768.1 1122.7L771.4 1122.7L774.7 1123.5L778.0 1123.5L783.0 1125.2L786.7 1124.2L790.4 1122.7L794.2 1119.8L797.3 1119.9L800.4 1120.5L803.5 1119.0L806.6 1118.0L810.3 1114.3L814.0 1108.1L816.5 1111.1L820.2 1109.3L824.0 1109.3L827.7 1110.8L832.7 1110.3L837.1 1107.3L841.4 1111.8L844.5 1112.3L847.6 1112.5L852.5 1112.3L857.5 1116.5L861.2 1115.3L866.2 1116.3L869.3 1114.6L872.4 1112.3L877.4 1112.3L879.9 1110.6L883.6 1110.8L887.3 1111.6L890.6 1112.1L894.0 1112.3L897.3 1112.3L901.7 1113.3L905.1 1111.9L908.4 1110.3L910.2 1111.3L913.4 1108.1L915.9 1110.1L920.9 1110.1L925.8 1113.0L928.3 1112.3L932.0 1113.3L935.0 1115.3L938.5 1114.7L942.0 1114.3L944.5 1118.5L949.4 1116.8L953.2 1118.3L958.1 1119.3L961.9 1118.3L965.6 1114.8L969.3 1115.3L973.0 1118.0L978.0 1117.3L981.7 1118.5L986.7 1119.8L990.4 1118.5L993.5 1118.9L996.6 1119.8L1001.6 1122.5L1004.3 1122.2L1007.1 1122.9L1009.8 1122.5L1012.5 1122.8L1015.3 1122.7L1019.0 1121.0L1022.0 1117.3L1025.2 1118.3L1028.3 1118.1L1031.4 1118.3L1034.7 1119.4L1038.1 1120.2L1041.4 1121.0L1046.3 1119.3L1049.4 1119.7L1052.5 1120.5L1055.4 1119.9L1058.3 1119.8L1061.2 1119.3L1064.1 1118.7L1067.0 1118.5L1069.9 1118.4L1072.8 1118.3L1075.7 1117.9L1078.6 1117.5L1081.9 1117.5L1085.3 1118.1L1088.6 1118.0L1091.9 1118.5L1095.2 1119.0L1098.5 1120.0L1100.0 1119.3L1103.1 1119.1L1106.2 1119.3L1109.0 1120.1L1111.8 1120.7L1114.6 1121.6L1117.4 1122.7L1120.7 1122.9L1124.0 1123.3L1127.3 1123.5L1132.3 1127.2L1135.2 1127.0L1138.1 1127.3L1141.0 1127.7L1143.9 1127.9L1146.8 1127.7L1149.7 1127.7L1152.7 1127.7L1155.7 1127.6L1158.6 1127.2L1161.6 1127.0L1164.6 1127.2L1167.9 1127.5L1171.2 1128.8L1174.5 1129.2L1178.3 1129.3L1182.0 1129.2L1187.0 1128.2L1189.8 1128.7L1192.6 1128.1L1195.5 1128.7L1198.3 1128.8L1201.2 1129.1L1204.0 1128.9L1206.8 1129.2L1209.6 1129.4L1212.4 1128.5L1215.2 1128.7L1218.0 1128.6L1220.8 1128.5L1223.6 1128.2L1226.4 1128.0L1229.2 1127.7L1232.0 1128.0L1234.9 1128.2L1237.7 1127.9L1240.6 1128.3L1243.4 1128.5L1246.2 1128.6L1249.1 1128.4L1251.8 1128.4L1254.6 1128.8L1257.3 1128.9L1260.1 1128.7L1262.9 1128.8L1265.6 1128.7L1268.4 1128.9L1271.2 1129.0L1273.9 1128.9L1276.9 1128.6L1279.9 1128.8L1282.9 1129.0L1285.8 1128.8L1288.8 1128.4L1291.9 1127.1L1295.0 1125.5L1297.9 1125.6L1300.8 1126.1L1303.7 1126.2L1307.0 1125.9L1310.4 1125.3L1313.7 1125.0L1316.6 1125.5L1319.6 1125.2L1322.6 1125.9L1325.6 1125.6L1328.6 1126.2L1331.6 1126.2L1334.5 1126.1L1337.5 1125.9L1340.5 1126.2L1343.5 1126.0L1347.2 1125.2L1350.3 1126.7L1353.4 1128.2L1356.7 1128.3L1360.0 1128.5L1363.4 1128.2L1366.7 1127.7L1370.0 1127.2L1373.3 1127.2L1376.2 1127.1L1379.1 1127.4L1382.0 1127.1L1384.9 1127.1L1387.8 1127.7L1390.7 1127.5L1394.4 1128.1L1398.1 1128.4L1401.0 1128.5L1403.8 1128.9L1406.7 1128.5L1409.5 1128.8L1412.3 1128.6L1415.2 1128.8L1418.0 1128.9L1421.1 1128.8L1424.2 1128.6L1427.3 1128.3L1430.4 1127.7L1433.4 1127.5L1436.4 1127.5L1439.4 1127.1L1442.4 1126.9L1445.3 1127.0L1448.4 1127.1L1451.6 1127.4L1454.7 1127.6L1457.8 1127.5L1461.1 1127.8L1464.4 1128.3L1467.7 1128.2L1470.5 1128.0L1473.4 1127.8L1476.2 1128.0L1479.1 1127.8L1481.9 1127.6L1484.7 1127.7L1487.6 1127.7L1490.4 1127.9L1493.3 1127.8L1496.1 1127.8L1498.9 1128.2L1501.8 1128.4L1504.6 1128.1L1507.5 1128.2L1510.8 1127.1L1514.1 1126.2L1517.4 1125.7L1520.4 1124.7L1524.8 1125.5L1527.5 1125.6L1530.2 1125.0L1532.9 1125.4L1535.6 1125.2L1538.3 1124.9L1541.0 1125.0L1544.1 1125.8L1547.2 1126.2L1550.1 1125.8L1553.0 1125.8L1555.9 1125.9L1558.8 1125.5L1561.7 1126.0L1564.6 1125.7L1568.3 1126.3L1572.0 1127.2L1575.0 1126.8L1578.0 1126.5L1581.0 1126.7L1584.0 1126.4L1587.0 1126.2L1590.1 1125.9L1593.2 1125.6L1596.3 1125.3L1599.4 1124.7L1602.5 1125.3L1605.6 1125.3L1608.7 1125.3L1611.8 1125.7L1614.9 1125.6L1618.0 1125.4L1621.1 1125.2L1624.2 1125.5L1627.5 1125.6L1630.8 1125.9L1634.2 1126.0L1637.1 1125.6L1640.1 1125.6L1643.1 1125.5L1646.1 1125.5L1648.6 1120.2L1651.6 1119.8L1654.5 1119.0L1657.4 1119.8L1660.2 1120.5L1663.0 1120.7L1665.8 1120.9L1668.6 1120.8L1671.4 1121.0L1676.4 1122.5L1679.7 1122.7L1683.0 1122.8L1686.3 1122.5L1690.1 1125.2L1692.8 1124.8L1695.5 1125.3L1698.3 1125.1L1701.0 1124.6L1703.7 1124.7L1706.6 1124.8L1709.5 1125.1L1712.4 1125.4L1715.3 1125.1L1718.2 1125.4L1721.1 1125.5L1724.0 1125.7L1726.9 1125.6L1729.8 1125.7L1732.7 1125.3L1735.6 1125.4L1738.5 1125.2L1740.0 1125.2L1742.8 1125.1L1745.6 1125.5L1748.4 1125.6L1751.2 1125.6L1754.0 1125.7L1756.8 1125.4L1759.6 1125.9L1762.4 1125.7L1765.3 1125.8L1768.3 1125.5L1771.3 1124.8L1774.3 1124.7L1777.3 1124.2L1780.6 1123.2L1783.9 1122.7L1787.2 1121.5L1790.3 1122.1L1793.4 1122.0L1796.5 1122.1L1799.6 1122.7L1802.7 1123.2L1805.8 1123.7L1808.5 1123.6L1811.1 1123.5L1813.8 1123.2L1816.4 1122.7L1819.0 1123.0L1821.7 1122.3L1824.3 1122.6L1827.0 1122.2L1830.1 1122.3L1833.2 1122.6L1836.3 1123.2L1839.4 1123.2L1842.7 1122.7L1846.0 1122.5L1849.3 1122.5L1852.4 1122.9L1855.5 1123.5L1858.6 1124.0L1861.7 1124.2L1864.6 1124.4L1867.5 1124.7L1870.4 1124.5L1873.3 1124.9L1876.2 1124.3L1879.1 1124.7L1882.0 1124.6L1884.8 1124.9L1887.6 1124.8L1890.5 1125.2L1893.3 1125.2L1896.2 1125.2L1899.0 1125.2L1901.8 1125.4L1904.6 1125.1L1907.4 1124.9L1910.2 1124.9L1913.0 1125.1L1915.8 1125.1L1918.6 1124.6L1921.4 1124.7L1924.3 1124.1L1927.2 1123.4L1930.1 1122.2L1933.2 1122.6L1936.3 1123.0L1940.7 1121.2L1945.0 1123.2L1947.8 1123.1L1950.6 1122.6L1953.4 1122.7L1956.1 1122.5L1959.3 1122.8L1962.4 1123.2L1965.5 1123.1L1968.6 1123.7L1972.0 1123.7L1975.5 1123.0L1978.5 1126.0L1981.6 1125.7L1984.7 1125.3L1987.8 1125.2L1990.9 1124.7L1994.0 1125.0L1997.1 1125.1L2000.2 1125.4L2003.4 1125.5L2006.1 1125.1L2008.9 1125.3L2011.7 1125.1L2014.5 1125.4L2017.3 1125.3L2020.1 1124.7L2022.9 1124.8L2025.7 1124.7L2028.5 1124.6L2031.2 1124.9L2034.0 1125.3L2036.8 1125.4L2039.5 1125.3L2042.3 1125.3L2045.0 1125.3L2047.8 1125.7L2050.6 1125.7L2053.4 1126.0L2056.1 1125.5L2058.9 1125.9L2061.7 1125.4L2064.5 1125.5L2067.3 1125.5L2070.1 1125.8L2072.9 1125.7L2076.2 1126.1L2079.5 1126.6L2082.9 1127.2L2087.8 1126.5L2090.9 1125.3L2094.0 1124.0L2096.8 1123.5L2099.5 1123.6L2102.2 1123.0L2105.0 1123.0L2107.7 1122.7L2112.7 1123.7L2116.4 1126.0L2118.9 1123.5L2123.9 1124.5L2126.6 1124.0L2129.3 1123.8L2132.0 1123.7L2134.8 1123.4L2137.5 1123.2L2140.4 1123.4L2143.2 1123.7L2146.0 1124.1L2148.9 1124.1L2151.7 1124.4L2154.6 1125.0L2157.4 1125.2L2160.7 1124.8L2164.0 1124.2L2167.3 1123.7L2170.3 1123.9L2173.3 1123.6L2176.3 1123.7L2179.3 1123.1L2182.2 1123.2L2187.2 1125.0L2190.0 1125.1L2192.7 1125.1L2195.5 1125.2L2198.2 1124.7L2201.0 1124.7L2203.8 1125.1L2206.5 1124.6L2209.3 1125.1L2212.0 1124.7L2215.8 1125.2L2219.5 1125.2L2220.0 1124.8L2223.7 1124.8L2227.5 1125.3L2230.2 1124.4L2233.0 1123.8L2237.7 1120.1L2241.4 1113.6L2245.2 1110.8L2249.4 1104.3L2252.6 1104.8L2255.4 1099.6L2258.2 1087.5L2261.0 1081.0L2263.2 1086.6L2265.6 1078.6L2268.4 1088.1L2270.7 1084.3L2274.0 1083.2L2277.8 1080.1L2280.6 1087.5L2284.3 1087.0L2287.4 1086.2L2291.7 1090.7L2294.5 1090.7L2297.3 1083.8L2302.0 1083.2L2304.6 1084.6L2307.2 1085.1L2311.3 1078.2L2313.7 1065.7L2316.0 1064.2L2319.7 1068.3L2321.5 1066.6L2326.2 1070.2L2330.9 1067.6L2334.6 1075.4L2338.3 1084.3L2341.6 1083.6L2344.8 1083.8L2347.6 1078.9L2350.4 1075.4L2352.7 1077.8L2355.1 1076.0L2357.9 1079.7L2360.1 1080.1L2363.5 1087.0L2366.3 1088.4L2369.1 1084.7L2371.9 1081.4L2374.3 1083.8L2377.4 1089.7L2380.2 1088.1L2384.0 1083.8L2386.2 1084.7L2388.8 1080.4L2391.4 1084.2L2395.1 1082.5L2397.9 1084.7L2401.7 1089.9L2405.4 1091.8L2407.8 1089.4L2412.8 1097.4L2417.5 1089.0L2422.2 1090.3L2425.9 1090.9L2429.6 1087.5L2433.3 1088.1L2437.1 1086.0L2440.8 1088.4L2443.6 1089.5L2446.4 1089.4L2449.2 1085.2L2452.0 1081.4L2455.7 1080.1L2459.4 1084.3L2462.2 1083.2L2465.0 1084.3L2467.8 1083.8L2471.5 1086.2L2476.2 1089.4L2479.9 1087.5L2482.7 1090.7L2487.4 1085.1L2492.0 1088.8L2495.3 1089.3L2498.6 1088.8L2502.3 1091.2L2506.0 1088.4L2509.7 1089.4L2513.5 1088.1L2516.7 1087.1L2520.0 1087.5L2523.7 1083.2L2527.1 1075.4L2530.8 1072.0L2533.4 1060.9L2535.8 1060.1L2538.2 1058.1L2540.5 1067.0L2543.3 1067.4L2545.7 1065.2L2549.8 1069.8L2552.6 1075.8L2555.4 1068.9L2558.2 1070.7L2562.5 1064.2L2565.6 1068.9L2570.3 1074.1L2574.0 1069.4L2576.3 1073.5L2578.7 1071.7L2582.4 1075.0L2586.1 1074.1L2589.9 1075.4L2593.6 1072.6L2598.2 1068.3L2601.0 1069.8L2605.7 1069.3L2610.3 1074.1L2613.1 1072.6L2615.9 1075.4L2619.7 1073.5L2622.8 1069.3L2625.3 1070.7L2628.0 1070.7L2629.9 1073.5L2632.1 1084.7L2634.6 1080.6L2639.2 1085.6L2642.6 1082.5L2644.8 1084.3L2648.5 1081.4L2651.9 1077.8L2654.1 1079.1L2656.9 1082.9L2658.2 1081.9L2660.7 1084.2" fill="none" stroke="#a3b7ee" stroke-width="1.2" stroke-linejoin="round" clip-path="url(#win)"/>
<rect x="2554.5" y="1081.2" width="28.8" height="34.2" rx="11.5" fill="#363842" filter="url(#hb)"/>
<line x1="2566.1" y1="1093" x2="2566.1" y2="1104.8" stroke="#b2b4bc" stroke-width="1.9"/>
<line x1="2572.3" y1="1093" x2="2572.3" y2="1104.8" stroke="#b2b4bc" stroke-width="1.9"/>
<rect x="2655.6" y="1081.2" width="28.8" height="34.2" rx="11.5" fill="#363842" filter="url(#hb)"/>
<line x1="2666.9" y1="1093" x2="2666.9" y2="1104.8" stroke="#b2b4bc" stroke-width="1.9"/>
<line x1="2673.1" y1="1093" x2="2673.1" y2="1104.8" stroke="#b2b4bc" stroke-width="1.9"/>
<rect x="2564.8" y="1001.8" width="226" height="43.6" rx="5" fill="#000"/>
<text x="2578.54" y="1029.80" font-size="24.50" fill="#fff" textLength="26.05" lengthAdjust="spacingAndGlyphs" stroke="#fff" stroke-width="0.35">13</text>
<text x="2609.65" y="1029.80" font-size="24.50" fill="#fff" textLength="41.23" lengthAdjust="spacingAndGlyphs" stroke="#fff" stroke-width="0.35">Nov</text>
<text x="2658.15" y="1029.80" font-size="24.50" fill="#fff" textLength="57.77" lengthAdjust="spacingAndGlyphs" stroke="#fff" stroke-width="0.35">2025,</text>
<text x="2720.64" y="1029.80" font-size="24.50" fill="#fff" textLength="59.75" lengthAdjust="spacingAndGlyphs" stroke="#fff" stroke-width="0.35">03:00</text>
<rect x="2786" y="1006.4" width="10" height="46" rx="3" fill="#56585f"/>
<rect x="2226" y="756" width="417" height="218" rx="24" fill="#000" fill-opacity="0.35" filter="url(#sh)"/>
<rect x="2230" y="758" width="408.8" height="209.8" rx="19" fill="#04060a"/>
<text x="2259.77" y="819.70" font-size="29.60" fill="#fff" textLength="31.64" lengthAdjust="spacingAndGlyphs" stroke="#fff" stroke-width="0.35">13</text>
<text x="2298.93" y="819.70" font-size="29.60" fill="#fff" textLength="52.67" lengthAdjust="spacingAndGlyphs" stroke="#fff" stroke-width="0.35">Nov</text>
<text x="2359.25" y="819.70" font-size="29.60" fill="#fff" textLength="72.69" lengthAdjust="spacingAndGlyphs" stroke="#fff" stroke-width="0.35">2025,</text>
<text x="2437.61" y="819.70" font-size="29.60" fill="#fff" textLength="74.61" lengthAdjust="spacingAndGlyphs" stroke="#fff" stroke-width="0.35">03:00</text>
<circle cx="2270.3" cy="873.1" r="8.4" fill="#e6bb58" stroke="#e4e7ec" stroke-width="3.8"/>
<text x="2287.41" y="883.60" font-size="29.60" fill="#d5dae3" textLength="56.49" lengthAdjust="spacingAndGlyphs">XRP</text>
<text x="2349.96" y="883.60" font-size="29.60" fill="#d5dae3" textLength="69.41" lengthAdjust="spacingAndGlyphs">Price</text>
<text x="2535.91" y="883.60" font-size="29.60" fill="#fff" textLength="72.87" lengthAdjust="spacingAndGlyphs" stroke="#fff" stroke-width="0.7">$2.39</text>
<circle cx="2270.3" cy="916.9" r="8.4" fill="#5dc389" stroke="#e4e7ec" stroke-width="3.8"/>
<text x="2287.77" y="928.00" font-size="29.60" fill="#d5dae3" textLength="72.39" lengthAdjust="spacingAndGlyphs">Open</text>
<text x="2365.76" y="928.00" font-size="29.60" fill="#d5dae3" textLength="109.07" lengthAdjust="spacingAndGlyphs">Interest</text>
<text x="2516.71" y="928.00" font-size="29.60" fill="#fff" textLength="92.13" lengthAdjust="spacingAndGlyphs" stroke="#fff" stroke-width="0.7">$3.67B</text>
</svg>
</body></html>
